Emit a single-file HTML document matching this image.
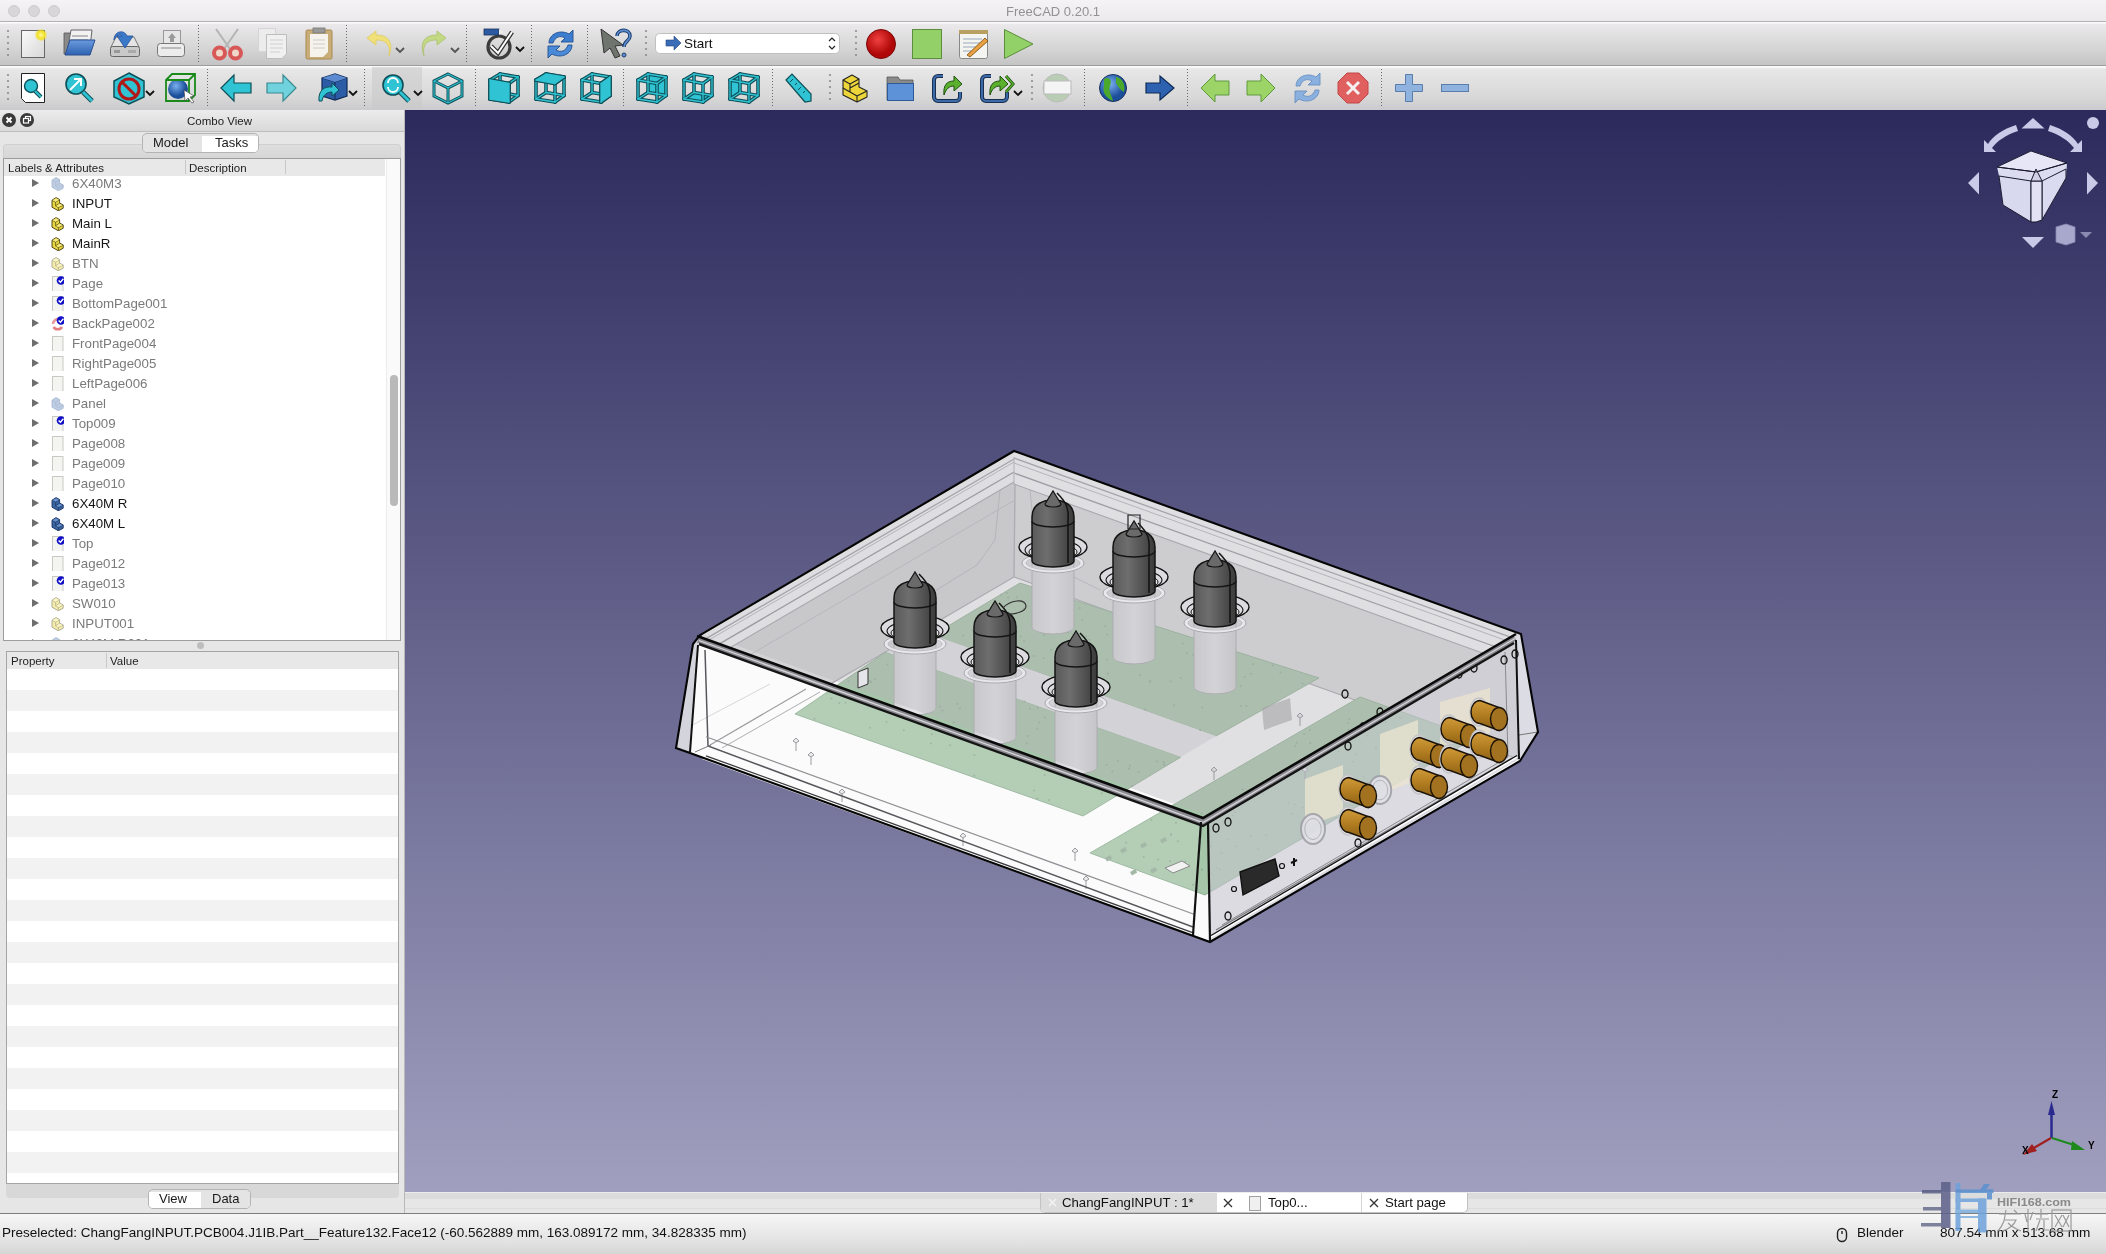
<!DOCTYPE html>
<html><head><meta charset="utf-8">
<style>
*{box-sizing:border-box;margin:0;padding:0}
html,body{width:2106px;height:1254px;overflow:hidden;background:#e9e9e9;font-family:"Liberation Sans",sans-serif;color:#1a1a1a}
body{will-change:transform}
.a{position:absolute}
#title{left:0;top:0;width:2106px;height:22px;background:linear-gradient(#f5f3f5,#ebe9eb);border-bottom:1px solid #b2b0b2}
#title .dot{position:absolute;top:5px;width:12px;height:12px;border-radius:50%;background:#d8d6d8;border:1px solid #cdcbcd}
#title .t{position:absolute;left:0;width:2106px;top:4px;text-align:center;font-size:13px;color:#939193}
.tb{left:0;width:2106px;border-bottom:1px solid #9c9c9c}
#tb1{top:22px;height:44px;background:linear-gradient(#fcfcfc 0,#fcfcfc 1px,#ebe9eb 2px,#d6d6d6 60%,#c4c4c4 100%)}
#tb2{top:66px;height:44px;border-bottom:none;background:linear-gradient(#fafafa 0,#fafafa 1px,#e7e7e7 3px,#d8d8d8 70%,#cbcace 100%)}
.grip{position:absolute;left:7px;width:3px;height:30px;background:radial-gradient(circle,#8a8a8a 1px,transparent 1.3px) 0 0/3px 6px}
.sep{position:absolute;width:1px;height:36px;background:repeating-linear-gradient(#707070 0 1px,transparent 1px 3px)}
#left{left:0;top:110px;width:405px;height:1103px;background:#e6e6e6;border-right:1px solid #b9b9b9}
#view{left:405px;top:110px;width:1701px;height:1082px;background:linear-gradient(#2c2a5c,#a09fbf)}
#tabs{left:405px;top:1192px;width:1701px;height:21px;background:linear-gradient(#ececf0 0,#ececf0 1px,#dcdcdc 1px,#dcdcdc 7px,#e6e6e6 7px,#e6e6e6 16px,#dcdcdc 16px,#dcdcdc 17px,#e6e6e6 17px)}
#status{left:0;top:1213px;width:2106px;height:41px;background:linear-gradient(#f6f6f6,#e2e2e2 70%,#d6d6d6);border-top:1px solid #7e7e7e}
.st{position:absolute;font-size:13px;top:11px;color:#111}
/* left panel */
#combo{left:0;top:0;width:404px;height:22px;background:linear-gradient(#ececec,#d9d9d9);border-bottom:1px solid #bdbdbd}
#combo .ct{position:absolute;left:36px;width:367px;text-align:center;top:5px;font-size:11.5px;color:#222}
.cbtn{position:absolute;top:3px;width:14px;height:14px;border-radius:50%;background:#3a3a3a}
.seg{position:absolute;height:20px;border:1px solid #b4b4b4;border-radius:5px;background:#e3e3e3;overflow:hidden;font-size:13px}
.seg span{position:absolute;top:2px;height:18px}
#tframe{left:3px;top:34px;width:398px;height:14px;background:linear-gradient(#dedede,#d6d6d6);border:1px solid #cfcfcf;border-bottom:none;border-radius:4px 4px 0 0}
#tree{left:3px;top:48px;width:398px;height:483px;background:#fff;border:1px solid #9d9d9d;overflow:hidden}
#thead{left:0;top:0;width:381px;height:17px;background:#e8e8e8;font-size:11.5px;color:#222}
#thead span{position:absolute;top:3px}
.row{position:absolute;left:0;height:20px;width:380px;font-size:13.3px}
.row .tri{position:absolute;left:28px;top:6px;width:0;height:0;border-left:7px solid #6e6e6e;border-top:4.5px solid transparent;border-bottom:4.5px solid transparent}
.row .ic{position:absolute;left:47px;top:3px;width:13px;height:15px}
.row span{position:absolute;left:68px;top:3px}
.g{color:#7a7a7a}.d{color:#151515}
#sbtrack{left:382px;top:0;width:15px;height:481px;background:#fafafa;border-left:1px solid #ececec}
#sbthumb{left:386px;top:216px;width:8px;height:131px;border-radius:4px;background:#b9b9b9}
#prop{left:6px;top:541px;width:393px;height:533px;background:#fff;border:1px solid #a5a5a5;overflow:hidden}
#phead{left:0;top:0;width:391px;height:17px;background:#e8e8e8;font-size:11.5px;color:#222}
#phead span{position:absolute;top:3px}
.prow{position:absolute;left:0;width:391px;height:21px;background:#f3f2f3}
#pframe{left:6px;top:1074px;width:393px;height:14px;background:#d8d8d8;border-radius:0 0 4px 4px}
</style></head><body>
<svg width="0" height="0" style="position:absolute">
<defs>
 <g id="yel"><path d="M1,4.2 L5,1.6 L8.6,3.6 L8.6,7 L12.2,9 L12.2,12.2 L7.4,14.8 L1,11.2 Z" fill="#e9d741" stroke="#3f3810" stroke-width="0.9" stroke-linejoin="round"/><path d="M1,4.2 L4.6,6.2 L8.6,3.6 M4.6,6.2 V9.8 L8.6,7.2 M4.6,9.8 L7.4,11.6 L12.2,9 M7.4,11.6 V14.8" fill="none" stroke="#5a4f16" stroke-width="0.8"/><path d="M1.6,4.3 L5,2.2 L8,3.8 L4.6,5.8 Z M5.2,10 L8.6,7.8 L11.6,9.2 L7.4,11 Z" fill="#f6ea80"/></g>
 <g id="yelf" opacity="0.45"><use href="#yel"/></g>
 <g id="blue"><path d="M1,4.2 L5,1.6 L8.6,3.6 L8.6,7 L12.2,9 L12.2,12.2 L7.4,14.8 L1,11.2 Z" fill="#3a64a0" stroke="#1a3060" stroke-width="0.9" stroke-linejoin="round"/><path d="M1,4.2 L4.6,6.2 L8.6,3.6 M4.6,6.2 V9.8 L8.6,7.2 M4.6,9.8 L7.4,11.6 L12.2,9 M7.4,11.6 V14.8" fill="none" stroke="#1e3a6a" stroke-width="0.8"/><path d="M1.6,4.3 L5,2.2 L8,3.8 L4.6,5.8 Z M5.2,10 L8.6,7.8 L11.6,9.2 L7.4,11 Z" fill="#6a92cc"/></g>
 <g id="bluef" opacity="0.5"><path d="M1,4.2 L5,1.6 L8.6,3.6 L8.6,7 L12.2,9 L12.2,12.2 L7.4,14.8 L1,11.2 Z" fill="#7e9cc8" stroke="#5a78a8" stroke-width="0.9" stroke-linejoin="round"/><path d="M1,4.2 L4.6,6.2 L8.6,3.6 M4.6,6.2 V9.8 L8.6,7.2 M4.6,9.8 L7.4,11.6 L12.2,9" fill="none" stroke="#5a78a8" stroke-width="0.7"/></g>
 <g id="page"><rect x="1.5" y="0.5" width="10.5" height="15" fill="#f4f4f0" stroke="#c9c9c4" stroke-width="1"/></g>
 <g id="chk"><circle cx="10" cy="4.5" r="4.3" fill="#1010c8"/><path d="M7.6,4.6 L9.4,6.3 L12.4,2.8" fill="none" stroke="#fff" stroke-width="1.4"/></g>
 <g id="pagec"><use href="#page"/><use href="#chk"/></g>
 <g id="backc"><path d="M2,8 A5,5 0 0 1 9,3.5" fill="none" stroke="#e89a9a" stroke-width="2.5"/><path d="M2.5,11 A5,5 0 0 0 11,11" fill="none" stroke="#e48080" stroke-width="2.5"/><use href="#chk"/></g>
</defs></svg>
<div id="title" class="a">
 <div class="dot" style="left:8px"></div><div class="dot" style="left:28px"></div><div class="dot" style="left:48px"></div>
 <div class="t">FreeCAD 0.20.1</div>
</div>
<div id="tb1" class="a tb"></div>
<div id="tb2" class="a tb"></div>
<svg class="a" style="left:0;top:0" width="2106" height="110" viewBox="0 0 2106 110">
<defs>
<linearGradient id="gPage" x1="0" y1="0" x2="1" y2="1"><stop offset="0" stop-color="#fafafa"/><stop offset="1" stop-color="#d8d8d8"/></linearGradient>
<radialGradient id="gSun"><stop offset="0" stop-color="#fff7a0"/><stop offset="0.6" stop-color="#f2e020"/><stop offset="1" stop-color="#f2e020" stop-opacity="0"/></radialGradient>
<linearGradient id="gBlue" x1="0" y1="0" x2="0" y2="1"><stop offset="0" stop-color="#6a9be0"/><stop offset="1" stop-color="#2e62b0"/></linearGradient>
<radialGradient id="gRed" cx="0.4" cy="0.35"><stop offset="0" stop-color="#f04040"/><stop offset="1" stop-color="#b00808"/></radialGradient>
<radialGradient id="gGlobe" cx="0.4" cy="0.35"><stop offset="0" stop-color="#7ab0f0"/><stop offset="1" stop-color="#1c4f9a"/></radialGradient>
</defs>
<circle cx="8" cy="31" r="1.1" fill="#8c8c8c"/>
<circle cx="8" cy="37" r="1.1" fill="#8c8c8c"/>
<circle cx="8" cy="43" r="1.1" fill="#8c8c8c"/>
<circle cx="8" cy="49" r="1.1" fill="#8c8c8c"/>
<circle cx="8" cy="55" r="1.1" fill="#8c8c8c"/>
<rect x="21.5" y="30.5" width="23" height="27" fill="url(#gPage)" stroke="#666" stroke-width="1"/>
<circle cx="41" cy="35" r="6.5" fill="url(#gSun)"/>
<polygon points="64,33 70,33 72,35 72,54 64,54" fill="#8a8a8a" stroke="#555" stroke-width="0.8"/>
<polygon points="71,30 92,30 90,47 68,47" fill="#f2f2f2" stroke="#666" stroke-width="1"/>
<path d="M72,36 H88 M71,40 H88" stroke="#aaa" stroke-width="1.5"/>
<polygon points="65,55 70,40 95,40 90,55" fill="url(#gBlue)" stroke="#2a4f90" stroke-width="1"/>
<polygon points="111,47 116,37 134,37 139,47" fill="#e4e4e4" stroke="#777" stroke-width="1"/>
<rect x="110.5" y="46.5" width="29" height="10" rx="2" fill="#c9c9c9" stroke="#666" stroke-width="1"/>
<rect x="114" y="50" width="6" height="3" fill="#999"/><rect x="128" y="50" width="8" height="3" fill="#aaa"/>
<path d="M114,40 C114,31 124,29 127,36 L133,36 L125,48 L117,36 L122,36 C120,34 116,35 114,40 Z" fill="#3b78c8" stroke="#24509a" stroke-width="0.8"/>
<rect x="163.5" y="30.5" width="17" height="14" fill="#e6e6e6" stroke="#999" stroke-width="1"/>
<path d="M172,33 L176,38 H174 V42 H170 V38 H168 Z" fill="#9a9a9a"/>
<rect x="157.5" y="43.5" width="27" height="13" rx="3" fill="#ececec" stroke="#777" stroke-width="1"/>
<path d="M161,48 H181" stroke="#bbb" stroke-width="2"/>
<line x1="198.5" y1="25" x2="198.5" y2="62" stroke="#6a6a6a" stroke-width="1" stroke-dasharray="1,2"/>
<path d="M216,29 L230,49 M238,29 L224,49" stroke="#b4b4b4" stroke-width="2"/>
<ellipse cx="219.5" cy="53" rx="5.5" ry="5.5" fill="#f0d8c8" stroke="#d85858" stroke-width="4"/><ellipse cx="235.5" cy="53" rx="5.5" ry="5.5" fill="#f0d8c8" stroke="#d85858" stroke-width="4"/>
<rect x="258.5" y="28.5" width="17" height="23" fill="#ececec" stroke="#d4d4d4" stroke-width="1"/>
<polygon points="266.5,34.5 286.5,34.5 286.5,54 282,58.5 266.5,58.5" fill="#f0f0f0" stroke="#bdbdbd" stroke-width="1"/>
<path d="M270,40 H283 M270,44 H283 M270,48 H283 M270,52 H280" stroke="#d0d0d0" stroke-width="1"/>
<rect x="306" y="30" width="26" height="29" rx="1.5" fill="#c8ad78" stroke="#a88a50" stroke-width="1"/>
<polygon points="310,34 328,34 328,52 323,57 310,57" fill="#f6f3ec"/>
<rect x="313" y="28" width="12" height="5" fill="#999" stroke="#777" stroke-width="0.8"/>
<path d="M313,40 H325 M313,44 H325 M313,48 H325" stroke="#ccc" stroke-width="1"/>
<line x1="346.5" y1="25" x2="346.5" y2="62" stroke="#6a6a6a" stroke-width="1" stroke-dasharray="1,2"/>
<path d="M389,56 C391,44 386,40 376,40 L376,45 L367,38 L376,31 L376,35 C388,35 394,42 389,56 Z" fill="#efe07a" stroke="#e0cc60" stroke-width="0.8"/>
<path d="M396,48 L400,52 L404,48" fill="none" stroke="#555" stroke-width="1.8"/>
<path d="M424,56 C422,44 427,40 437,40 L437,45 L446,38 L437,31 L437,35 C425,35 419,42 424,56 Z" fill="#c2d882" stroke="#aac070" stroke-width="0.8"/>
<path d="M451,48 L455,52 L459,48" fill="none" stroke="#555" stroke-width="1.8"/>
<line x1="466.5" y1="25" x2="466.5" y2="62" stroke="#6a6a6a" stroke-width="1" stroke-dasharray="1,2"/>
<circle cx="499" cy="47" r="11" fill="none" stroke="#3c3c3c" stroke-width="3.2"/>
<path d="M491,46 L498,53 L512,32" fill="none" stroke="#333" stroke-width="4.5"/><path d="M491,46 L498,53 L512,32" fill="none" stroke="#fff" stroke-width="2"/>
<rect x="484" y="29" width="15" height="6" fill="#2c5aa0" stroke="#1a3460" stroke-width="0.8"/><polygon points="499,29 503,32 499,35" fill="#eee"/>
<path d="M516,47 L520,51 L524,47" fill="none" stroke="#111" stroke-width="1.8"/>
<line x1="531.5" y1="25" x2="531.5" y2="62" stroke="#6a6a6a" stroke-width="1" stroke-dasharray="1,2"/>
<path d="M549,43 C549,34 560,29 569,34 L573,30 L573,42 L561,42 L565,38 C560,35 555,37 553,43 Z" fill="#3c7dd0" stroke="#1f4f8f" stroke-width="0.9"/>
<path d="M572,45 C572,54 561,59 552,54 L548,58 L548,46 L560,46 L556,50 C561,53 566,51 568,45 Z" fill="#4a8ad8" stroke="#1f4f8f" stroke-width="0.9"/>
<line x1="587.5" y1="25" x2="587.5" y2="62" stroke="#6a6a6a" stroke-width="1" stroke-dasharray="1,2"/>
<polygon points="601,29 623,45 615,46 620,56 615,58 610,48 604,53" fill="#6f746e" stroke="#333" stroke-width="1"/>
<path d="M617,36 C617,29 630,28 630,36 C630,41 624,41 624,47" fill="none" stroke="#1c3e70" stroke-width="3.6"/><path d="M617,36 C617,29 630,28 630,36 C630,41 624,41 624,47" fill="none" stroke="#5e8ed0" stroke-width="1.6"/>
<circle cx="624" cy="55" r="2" fill="#5e8ed0" stroke="#1c3e70" stroke-width="1"/>
<circle cx="646" cy="31" r="1.1" fill="#8c8c8c"/>
<circle cx="646" cy="37" r="1.1" fill="#8c8c8c"/>
<circle cx="646" cy="43" r="1.1" fill="#8c8c8c"/>
<circle cx="646" cy="49" r="1.1" fill="#8c8c8c"/>
<circle cx="646" cy="55" r="1.1" fill="#8c8c8c"/>
<rect x="655.5" y="33.5" width="184" height="20" rx="4" fill="#fff" stroke="#c0c0c0" stroke-width="1"/>
<polygon points="666,40 674,40 674,36 681,43 674,50 674,46 666,46" fill="#3a6cb8" stroke="#22457e" stroke-width="0.6"/>
<text x="684" y="48" font-family="Liberation Sans" font-size="13.5" fill="#111">Start</text>
<path d="M829,41 L832,38 L835,41 M829,46 L832,49 L835,46" fill="none" stroke="#222" stroke-width="1.2"/>
<circle cx="856" cy="31" r="1.1" fill="#8c8c8c"/>
<circle cx="856" cy="37" r="1.1" fill="#8c8c8c"/>
<circle cx="856" cy="43" r="1.1" fill="#8c8c8c"/>
<circle cx="856" cy="49" r="1.1" fill="#8c8c8c"/>
<circle cx="856" cy="55" r="1.1" fill="#8c8c8c"/>
<circle cx="881" cy="44" r="14.5" fill="url(#gRed)" stroke="#7a0a0a" stroke-width="1"/>
<rect x="912.5" y="29.5" width="29" height="29" fill="#93d068" stroke="#5c8e3e" stroke-width="1"/>
<rect x="959.5" y="31.5" width="28" height="27" rx="2" fill="#f4f4f0" stroke="#888" stroke-width="1"/>
<rect x="959" y="30" width="29" height="4" fill="#b8a060"/>
<path d="M963,39 H982 M963,43 H980 M963,47 H976 M963,51 H972" stroke="#9ab" stroke-width="1"/>
<path d="M967,55 L985,38 L988,41 L970,57 Z" fill="#e8a040" stroke="#7a4a10" stroke-width="0.8"/>
<polygon points="1004.5,29.5 1033,44 1004.5,58.5" fill="#92d068" stroke="#5c8e3e" stroke-width="1"/>
<circle cx="8" cy="75" r="1.1" fill="#8c8c8c"/>
<circle cx="8" cy="81" r="1.1" fill="#8c8c8c"/>
<circle cx="8" cy="87" r="1.1" fill="#8c8c8c"/>
<circle cx="8" cy="93" r="1.1" fill="#8c8c8c"/>
<circle cx="8" cy="99" r="1.1" fill="#8c8c8c"/>
<polygon points="21.5,73.5 44.5,73.5 44.5,102.5 25.5,102.5 21.5,98.5" fill="#fff" stroke="#222" stroke-width="1"/>
<circle cx="31" cy="86" r="6.5" fill="#2fc3d3" stroke="#0e4f57" stroke-width="1.4"/><path d="M35,91 L41,97" stroke="#0e4f57" stroke-width="4"/><path d="M35,91 L41,97" stroke="#2fc3d3" stroke-width="2"/>
<circle cx="76" cy="84" r="10" fill="#2fc3d3" stroke="#0e4f57" stroke-width="1.6"/><path d="M83,92 L92,101" stroke="#0e4f57" stroke-width="5"/><path d="M83,92 L92,101" stroke="#2fc3d3" stroke-width="3"/>
<path d="M70,90 L80,80 M74,79 H81 V86" fill="none" stroke="#fff" stroke-width="2"/>
<polygon points="129,73 144,81 144,97 129,104 114,97 114,81" fill="#2fc3d3" stroke="#0e4f57" stroke-width="1.5"/>
<circle cx="129" cy="89" r="10" fill="none" stroke="#b01818" stroke-width="3"/><path d="M122,82 L136,96" stroke="#b01818" stroke-width="3"/>
<path d="M146,91 L150,95 L154,91" fill="none" stroke="#111" stroke-width="1.8"/>
<circle cx="178" cy="89" r="10" fill="url(#gGlobe)"/>
<polygon points="166,80 172,74 195,74 195,95 189,101 166,101" fill="none" stroke="#1a8a1a" stroke-width="1.8"/><path d="M166,80 H189 V101 M189,80 L195,74" fill="none" stroke="#1a8a1a" stroke-width="1.8"/>
<polygon points="184,90 194,96 190,97 194,102 192,103 188,98 185,101" fill="#fff" stroke="#333" stroke-width="0.6"/>
<line x1="207.5" y1="69" x2="207.5" y2="106" stroke="#6a6a6a" stroke-width="1" stroke-dasharray="1,2"/>
<polygon points="221,88 234,75 234,83 251,83 251,93 234,93 234,101" fill="#2fc3d3" stroke="#0e4f57" stroke-width="1.2"/>
<polygon points="296,88 283,75 283,83 267,83 267,93 283,93 283,101" fill="#6fd2dc" stroke="#3a8a92" stroke-width="1.2"/>
<polygon points="322,78 335,74 347,78 347,96 335,100 322,96" fill="#2d5ca6" stroke="#0f2a55" stroke-width="1.2"/><path d="M322,78 L335,82 L347,78 M335,82 V100" fill="none" stroke="#0f2a55" stroke-width="1"/><polygon points="322,78 335,74 347,78 335,82" fill="#5b8ad0"/>
<path d="M319,101 C318,90 325,86 332,87 L332,83 L339,90 L332,96 L332,92 C327,92 323,95 322,101 Z" fill="#2fc3d3" stroke="#0e4f57" stroke-width="1"/>
<path d="M349,91 L353,95 L357,91" fill="none" stroke="#111" stroke-width="1.8"/>
<line x1="364.5" y1="69" x2="364.5" y2="106" stroke="#6a6a6a" stroke-width="1" stroke-dasharray="1,2"/>
<rect x="372" y="67" width="50" height="42" fill="#c9c9c9" opacity="0.55"/>
<circle cx="393" cy="85" r="10" fill="#2fc3d3" stroke="#0e4f57" stroke-width="1.6"/><path d="M400,92 L409,101" stroke="#0e4f57" stroke-width="5"/><path d="M400,92 L409,101" stroke="#2fc3d3" stroke-width="3"/>
<path d="M388,83 A5,5 0 0 1 398,83 M398,87 A5,5 0 0 1 388,87" fill="none" stroke="#fff" stroke-width="1.8"/>
<path d="M414,91 L418,95 L422,91" fill="none" stroke="#111" stroke-width="1.8"/>
<g stroke="#0e4f57" fill="none" stroke-width="3"><polygon points="448,74 462,81 462,96 448,103 434,96 434,81"/><path d="M434,81 L448,88 L462,81 M448,88 V103"/></g>
<g stroke="#2fc3d3" fill="none" stroke-width="1.1"><polygon points="448,74 462,81 462,96 448,103 434,96 434,81"/><path d="M434,81 L448,88 L462,81 M448,88 V103"/></g>
<line x1="475.5" y1="69" x2="475.5" y2="106" stroke="#6a6a6a" stroke-width="1" stroke-dasharray="1,2"/>
<g transform="translate(489,73)" stroke-linejoin="round" stroke-linecap="round"><line x1="1" y1="7" x2="20" y2="10.5" stroke="#0e4f57" stroke-width="3.6"/><line x1="20" y1="10.5" x2="20" y2="29" stroke="#0e4f57" stroke-width="3.6"/><line x1="20" y1="29" x2="1" y2="26" stroke="#0e4f57" stroke-width="3.6"/><line x1="1" y1="26" x2="1" y2="7" stroke="#0e4f57" stroke-width="3.6"/><line x1="11" y1="1" x2="29" y2="4" stroke="#0e4f57" stroke-width="3.6"/><line x1="29" y1="4" x2="29" y2="22.5" stroke="#0e4f57" stroke-width="3.6"/><line x1="29" y1="22.5" x2="11" y2="19.5" stroke="#0e4f57" stroke-width="3.6"/><line x1="11" y1="19.5" x2="11" y2="1" stroke="#0e4f57" stroke-width="3.6"/><line x1="1" y1="7" x2="11" y2="1" stroke="#0e4f57" stroke-width="3.6"/><line x1="20" y1="10.5" x2="29" y2="4" stroke="#0e4f57" stroke-width="3.6"/><line x1="20" y1="29" x2="29" y2="22.5" stroke="#0e4f57" stroke-width="3.6"/><line x1="1" y1="26" x2="11" y2="19.5" stroke="#0e4f57" stroke-width="3.6"/><line x1="1" y1="7" x2="20" y2="10.5" stroke="#2fc3d3" stroke-width="1.3"/><line x1="20" y1="10.5" x2="20" y2="29" stroke="#2fc3d3" stroke-width="1.3"/><line x1="20" y1="29" x2="1" y2="26" stroke="#2fc3d3" stroke-width="1.3"/><line x1="1" y1="26" x2="1" y2="7" stroke="#2fc3d3" stroke-width="1.3"/><line x1="11" y1="1" x2="29" y2="4" stroke="#2fc3d3" stroke-width="1.3"/><line x1="29" y1="4" x2="29" y2="22.5" stroke="#2fc3d3" stroke-width="1.3"/><line x1="29" y1="22.5" x2="11" y2="19.5" stroke="#2fc3d3" stroke-width="1.3"/><line x1="11" y1="19.5" x2="11" y2="1" stroke="#2fc3d3" stroke-width="1.3"/><line x1="1" y1="7" x2="11" y2="1" stroke="#2fc3d3" stroke-width="1.3"/><line x1="20" y1="10.5" x2="29" y2="4" stroke="#2fc3d3" stroke-width="1.3"/><line x1="20" y1="29" x2="29" y2="22.5" stroke="#2fc3d3" stroke-width="1.3"/><line x1="1" y1="26" x2="11" y2="19.5" stroke="#2fc3d3" stroke-width="1.3"/><polygon points="1,7 20,10.5 20,29 1,26" fill="#2fc3d3" stroke="#0e4f57" stroke-width="1.6"/><line x1="1" y1="7" x2="20" y2="10.5" stroke="#0e4f57" stroke-width="3.6"/><line x1="20" y1="10.5" x2="20" y2="29" stroke="#0e4f57" stroke-width="3.6"/><line x1="20" y1="29" x2="1" y2="26" stroke="#0e4f57" stroke-width="3.6"/><line x1="1" y1="26" x2="1" y2="7" stroke="#0e4f57" stroke-width="3.6"/><line x1="1" y1="7" x2="20" y2="10.5" stroke="#2fc3d3" stroke-width="1.3"/><line x1="20" y1="10.5" x2="20" y2="29" stroke="#2fc3d3" stroke-width="1.3"/><line x1="20" y1="29" x2="1" y2="26" stroke="#2fc3d3" stroke-width="1.3"/><line x1="1" y1="26" x2="1" y2="7" stroke="#2fc3d3" stroke-width="1.3"/><polygon points="1,7 20,10.5 20,29 1,26" fill="#2fc3d3" stroke="none" transform="translate(0,0)"/></g>
<g transform="translate(535,73)" stroke-linejoin="round" stroke-linecap="round"><line x1="1" y1="7" x2="20" y2="10.5" stroke="#0e4f57" stroke-width="3.6"/><line x1="20" y1="10.5" x2="20" y2="29" stroke="#0e4f57" stroke-width="3.6"/><line x1="20" y1="29" x2="1" y2="26" stroke="#0e4f57" stroke-width="3.6"/><line x1="1" y1="26" x2="1" y2="7" stroke="#0e4f57" stroke-width="3.6"/><line x1="11" y1="1" x2="29" y2="4" stroke="#0e4f57" stroke-width="3.6"/><line x1="29" y1="4" x2="29" y2="22.5" stroke="#0e4f57" stroke-width="3.6"/><line x1="29" y1="22.5" x2="11" y2="19.5" stroke="#0e4f57" stroke-width="3.6"/><line x1="11" y1="19.5" x2="11" y2="1" stroke="#0e4f57" stroke-width="3.6"/><line x1="1" y1="7" x2="11" y2="1" stroke="#0e4f57" stroke-width="3.6"/><line x1="20" y1="10.5" x2="29" y2="4" stroke="#0e4f57" stroke-width="3.6"/><line x1="20" y1="29" x2="29" y2="22.5" stroke="#0e4f57" stroke-width="3.6"/><line x1="1" y1="26" x2="11" y2="19.5" stroke="#0e4f57" stroke-width="3.6"/><line x1="1" y1="7" x2="20" y2="10.5" stroke="#2fc3d3" stroke-width="1.3"/><line x1="20" y1="10.5" x2="20" y2="29" stroke="#2fc3d3" stroke-width="1.3"/><line x1="20" y1="29" x2="1" y2="26" stroke="#2fc3d3" stroke-width="1.3"/><line x1="1" y1="26" x2="1" y2="7" stroke="#2fc3d3" stroke-width="1.3"/><line x1="11" y1="1" x2="29" y2="4" stroke="#2fc3d3" stroke-width="1.3"/><line x1="29" y1="4" x2="29" y2="22.5" stroke="#2fc3d3" stroke-width="1.3"/><line x1="29" y1="22.5" x2="11" y2="19.5" stroke="#2fc3d3" stroke-width="1.3"/><line x1="11" y1="19.5" x2="11" y2="1" stroke="#2fc3d3" stroke-width="1.3"/><line x1="1" y1="7" x2="11" y2="1" stroke="#2fc3d3" stroke-width="1.3"/><line x1="20" y1="10.5" x2="29" y2="4" stroke="#2fc3d3" stroke-width="1.3"/><line x1="20" y1="29" x2="29" y2="22.5" stroke="#2fc3d3" stroke-width="1.3"/><line x1="1" y1="26" x2="11" y2="19.5" stroke="#2fc3d3" stroke-width="1.3"/><polygon points="1,7 11,1 29,4 20,10.5" fill="#2fc3d3" stroke="#0e4f57" stroke-width="1.6"/><line x1="1" y1="7" x2="11" y2="1" stroke="#0e4f57" stroke-width="3.6"/><line x1="11" y1="1" x2="29" y2="4" stroke="#0e4f57" stroke-width="3.6"/><line x1="29" y1="4" x2="20" y2="10.5" stroke="#0e4f57" stroke-width="3.6"/><line x1="20" y1="10.5" x2="1" y2="7" stroke="#0e4f57" stroke-width="3.6"/><line x1="1" y1="7" x2="11" y2="1" stroke="#2fc3d3" stroke-width="1.3"/><line x1="11" y1="1" x2="29" y2="4" stroke="#2fc3d3" stroke-width="1.3"/><line x1="29" y1="4" x2="20" y2="10.5" stroke="#2fc3d3" stroke-width="1.3"/><line x1="20" y1="10.5" x2="1" y2="7" stroke="#2fc3d3" stroke-width="1.3"/><polygon points="1,7 11,1 29,4 20,10.5" fill="#2fc3d3" stroke="none" transform="translate(0,0)"/></g>
<g transform="translate(581,73)" stroke-linejoin="round" stroke-linecap="round"><line x1="1" y1="7" x2="20" y2="10.5" stroke="#0e4f57" stroke-width="3.6"/><line x1="20" y1="10.5" x2="20" y2="29" stroke="#0e4f57" stroke-width="3.6"/><line x1="20" y1="29" x2="1" y2="26" stroke="#0e4f57" stroke-width="3.6"/><line x1="1" y1="26" x2="1" y2="7" stroke="#0e4f57" stroke-width="3.6"/><line x1="11" y1="1" x2="29" y2="4" stroke="#0e4f57" stroke-width="3.6"/><line x1="29" y1="4" x2="29" y2="22.5" stroke="#0e4f57" stroke-width="3.6"/><line x1="29" y1="22.5" x2="11" y2="19.5" stroke="#0e4f57" stroke-width="3.6"/><line x1="11" y1="19.5" x2="11" y2="1" stroke="#0e4f57" stroke-width="3.6"/><line x1="1" y1="7" x2="11" y2="1" stroke="#0e4f57" stroke-width="3.6"/><line x1="20" y1="10.5" x2="29" y2="4" stroke="#0e4f57" stroke-width="3.6"/><line x1="20" y1="29" x2="29" y2="22.5" stroke="#0e4f57" stroke-width="3.6"/><line x1="1" y1="26" x2="11" y2="19.5" stroke="#0e4f57" stroke-width="3.6"/><line x1="1" y1="7" x2="20" y2="10.5" stroke="#2fc3d3" stroke-width="1.3"/><line x1="20" y1="10.5" x2="20" y2="29" stroke="#2fc3d3" stroke-width="1.3"/><line x1="20" y1="29" x2="1" y2="26" stroke="#2fc3d3" stroke-width="1.3"/><line x1="1" y1="26" x2="1" y2="7" stroke="#2fc3d3" stroke-width="1.3"/><line x1="11" y1="1" x2="29" y2="4" stroke="#2fc3d3" stroke-width="1.3"/><line x1="29" y1="4" x2="29" y2="22.5" stroke="#2fc3d3" stroke-width="1.3"/><line x1="29" y1="22.5" x2="11" y2="19.5" stroke="#2fc3d3" stroke-width="1.3"/><line x1="11" y1="19.5" x2="11" y2="1" stroke="#2fc3d3" stroke-width="1.3"/><line x1="1" y1="7" x2="11" y2="1" stroke="#2fc3d3" stroke-width="1.3"/><line x1="20" y1="10.5" x2="29" y2="4" stroke="#2fc3d3" stroke-width="1.3"/><line x1="20" y1="29" x2="29" y2="22.5" stroke="#2fc3d3" stroke-width="1.3"/><line x1="1" y1="26" x2="11" y2="19.5" stroke="#2fc3d3" stroke-width="1.3"/><polygon points="20,10.5 29,4 29,22.5 20,29" fill="#2fc3d3" stroke="#0e4f57" stroke-width="1.6"/><line x1="20" y1="10.5" x2="29" y2="4" stroke="#0e4f57" stroke-width="3.6"/><line x1="29" y1="4" x2="29" y2="22.5" stroke="#0e4f57" stroke-width="3.6"/><line x1="29" y1="22.5" x2="20" y2="29" stroke="#0e4f57" stroke-width="3.6"/><line x1="20" y1="29" x2="20" y2="10.5" stroke="#0e4f57" stroke-width="3.6"/><line x1="20" y1="10.5" x2="29" y2="4" stroke="#2fc3d3" stroke-width="1.3"/><line x1="29" y1="4" x2="29" y2="22.5" stroke="#2fc3d3" stroke-width="1.3"/><line x1="29" y1="22.5" x2="20" y2="29" stroke="#2fc3d3" stroke-width="1.3"/><line x1="20" y1="29" x2="20" y2="10.5" stroke="#2fc3d3" stroke-width="1.3"/><polygon points="20,10.5 29,4 29,22.5 20,29" fill="#2fc3d3" stroke="none" transform="translate(0,0)"/></g>
<line x1="623.5" y1="69" x2="623.5" y2="106" stroke="#6a6a6a" stroke-width="1" stroke-dasharray="1,2"/>
<g transform="translate(637,73)" stroke-linejoin="round" stroke-linecap="round"><polygon points="11,1 29,4 29,22.5 11,19.5" fill="#2fc3d3" stroke="none"/><line x1="1" y1="7" x2="20" y2="10.5" stroke="#0e4f57" stroke-width="3.6"/><line x1="20" y1="10.5" x2="20" y2="29" stroke="#0e4f57" stroke-width="3.6"/><line x1="20" y1="29" x2="1" y2="26" stroke="#0e4f57" stroke-width="3.6"/><line x1="1" y1="26" x2="1" y2="7" stroke="#0e4f57" stroke-width="3.6"/><line x1="11" y1="1" x2="29" y2="4" stroke="#0e4f57" stroke-width="3.6"/><line x1="29" y1="4" x2="29" y2="22.5" stroke="#0e4f57" stroke-width="3.6"/><line x1="29" y1="22.5" x2="11" y2="19.5" stroke="#0e4f57" stroke-width="3.6"/><line x1="11" y1="19.5" x2="11" y2="1" stroke="#0e4f57" stroke-width="3.6"/><line x1="1" y1="7" x2="11" y2="1" stroke="#0e4f57" stroke-width="3.6"/><line x1="20" y1="10.5" x2="29" y2="4" stroke="#0e4f57" stroke-width="3.6"/><line x1="20" y1="29" x2="29" y2="22.5" stroke="#0e4f57" stroke-width="3.6"/><line x1="1" y1="26" x2="11" y2="19.5" stroke="#0e4f57" stroke-width="3.6"/><line x1="1" y1="7" x2="20" y2="10.5" stroke="#2fc3d3" stroke-width="1.3"/><line x1="20" y1="10.5" x2="20" y2="29" stroke="#2fc3d3" stroke-width="1.3"/><line x1="20" y1="29" x2="1" y2="26" stroke="#2fc3d3" stroke-width="1.3"/><line x1="1" y1="26" x2="1" y2="7" stroke="#2fc3d3" stroke-width="1.3"/><line x1="11" y1="1" x2="29" y2="4" stroke="#2fc3d3" stroke-width="1.3"/><line x1="29" y1="4" x2="29" y2="22.5" stroke="#2fc3d3" stroke-width="1.3"/><line x1="29" y1="22.5" x2="11" y2="19.5" stroke="#2fc3d3" stroke-width="1.3"/><line x1="11" y1="19.5" x2="11" y2="1" stroke="#2fc3d3" stroke-width="1.3"/><line x1="1" y1="7" x2="11" y2="1" stroke="#2fc3d3" stroke-width="1.3"/><line x1="20" y1="10.5" x2="29" y2="4" stroke="#2fc3d3" stroke-width="1.3"/><line x1="20" y1="29" x2="29" y2="22.5" stroke="#2fc3d3" stroke-width="1.3"/><line x1="1" y1="26" x2="11" y2="19.5" stroke="#2fc3d3" stroke-width="1.3"/></g>
<g transform="translate(683,73)" stroke-linejoin="round" stroke-linecap="round"><polygon points="1,26 11,19.5 29,22.5 20,29" fill="#2fc3d3" stroke="none"/><line x1="1" y1="7" x2="20" y2="10.5" stroke="#0e4f57" stroke-width="3.6"/><line x1="20" y1="10.5" x2="20" y2="29" stroke="#0e4f57" stroke-width="3.6"/><line x1="20" y1="29" x2="1" y2="26" stroke="#0e4f57" stroke-width="3.6"/><line x1="1" y1="26" x2="1" y2="7" stroke="#0e4f57" stroke-width="3.6"/><line x1="11" y1="1" x2="29" y2="4" stroke="#0e4f57" stroke-width="3.6"/><line x1="29" y1="4" x2="29" y2="22.5" stroke="#0e4f57" stroke-width="3.6"/><line x1="29" y1="22.5" x2="11" y2="19.5" stroke="#0e4f57" stroke-width="3.6"/><line x1="11" y1="19.5" x2="11" y2="1" stroke="#0e4f57" stroke-width="3.6"/><line x1="1" y1="7" x2="11" y2="1" stroke="#0e4f57" stroke-width="3.6"/><line x1="20" y1="10.5" x2="29" y2="4" stroke="#0e4f57" stroke-width="3.6"/><line x1="20" y1="29" x2="29" y2="22.5" stroke="#0e4f57" stroke-width="3.6"/><line x1="1" y1="26" x2="11" y2="19.5" stroke="#0e4f57" stroke-width="3.6"/><line x1="1" y1="7" x2="20" y2="10.5" stroke="#2fc3d3" stroke-width="1.3"/><line x1="20" y1="10.5" x2="20" y2="29" stroke="#2fc3d3" stroke-width="1.3"/><line x1="20" y1="29" x2="1" y2="26" stroke="#2fc3d3" stroke-width="1.3"/><line x1="1" y1="26" x2="1" y2="7" stroke="#2fc3d3" stroke-width="1.3"/><line x1="11" y1="1" x2="29" y2="4" stroke="#2fc3d3" stroke-width="1.3"/><line x1="29" y1="4" x2="29" y2="22.5" stroke="#2fc3d3" stroke-width="1.3"/><line x1="29" y1="22.5" x2="11" y2="19.5" stroke="#2fc3d3" stroke-width="1.3"/><line x1="11" y1="19.5" x2="11" y2="1" stroke="#2fc3d3" stroke-width="1.3"/><line x1="1" y1="7" x2="11" y2="1" stroke="#2fc3d3" stroke-width="1.3"/><line x1="20" y1="10.5" x2="29" y2="4" stroke="#2fc3d3" stroke-width="1.3"/><line x1="20" y1="29" x2="29" y2="22.5" stroke="#2fc3d3" stroke-width="1.3"/><line x1="1" y1="26" x2="11" y2="19.5" stroke="#2fc3d3" stroke-width="1.3"/></g>
<g transform="translate(729,73)" stroke-linejoin="round" stroke-linecap="round"><polygon points="1,7 11,1 11,19.5 1,26" fill="#2fc3d3" stroke="none"/><line x1="1" y1="7" x2="20" y2="10.5" stroke="#0e4f57" stroke-width="3.6"/><line x1="20" y1="10.5" x2="20" y2="29" stroke="#0e4f57" stroke-width="3.6"/><line x1="20" y1="29" x2="1" y2="26" stroke="#0e4f57" stroke-width="3.6"/><line x1="1" y1="26" x2="1" y2="7" stroke="#0e4f57" stroke-width="3.6"/><line x1="11" y1="1" x2="29" y2="4" stroke="#0e4f57" stroke-width="3.6"/><line x1="29" y1="4" x2="29" y2="22.5" stroke="#0e4f57" stroke-width="3.6"/><line x1="29" y1="22.5" x2="11" y2="19.5" stroke="#0e4f57" stroke-width="3.6"/><line x1="11" y1="19.5" x2="11" y2="1" stroke="#0e4f57" stroke-width="3.6"/><line x1="1" y1="7" x2="11" y2="1" stroke="#0e4f57" stroke-width="3.6"/><line x1="20" y1="10.5" x2="29" y2="4" stroke="#0e4f57" stroke-width="3.6"/><line x1="20" y1="29" x2="29" y2="22.5" stroke="#0e4f57" stroke-width="3.6"/><line x1="1" y1="26" x2="11" y2="19.5" stroke="#0e4f57" stroke-width="3.6"/><line x1="1" y1="7" x2="20" y2="10.5" stroke="#2fc3d3" stroke-width="1.3"/><line x1="20" y1="10.5" x2="20" y2="29" stroke="#2fc3d3" stroke-width="1.3"/><line x1="20" y1="29" x2="1" y2="26" stroke="#2fc3d3" stroke-width="1.3"/><line x1="1" y1="26" x2="1" y2="7" stroke="#2fc3d3" stroke-width="1.3"/><line x1="11" y1="1" x2="29" y2="4" stroke="#2fc3d3" stroke-width="1.3"/><line x1="29" y1="4" x2="29" y2="22.5" stroke="#2fc3d3" stroke-width="1.3"/><line x1="29" y1="22.5" x2="11" y2="19.5" stroke="#2fc3d3" stroke-width="1.3"/><line x1="11" y1="19.5" x2="11" y2="1" stroke="#2fc3d3" stroke-width="1.3"/><line x1="1" y1="7" x2="11" y2="1" stroke="#2fc3d3" stroke-width="1.3"/><line x1="20" y1="10.5" x2="29" y2="4" stroke="#2fc3d3" stroke-width="1.3"/><line x1="20" y1="29" x2="29" y2="22.5" stroke="#2fc3d3" stroke-width="1.3"/><line x1="1" y1="26" x2="11" y2="19.5" stroke="#2fc3d3" stroke-width="1.3"/></g>
<line x1="772.5" y1="69" x2="772.5" y2="106" stroke="#6a6a6a" stroke-width="1" stroke-dasharray="1,2"/>
<polygon points="786,80 792,74 811,94 811,101 805,102" fill="#2fc3d3" stroke="#0e4f57" stroke-width="1.2"/>
<path d="M793,79 L790,82 M797,83 L795,85 M801,87 L798,90 M805,91 L803,93" stroke="#0e4f57" stroke-width="1"/>
<circle cx="830" cy="75" r="1.1" fill="#8c8c8c"/>
<circle cx="830" cy="81" r="1.1" fill="#8c8c8c"/>
<circle cx="830" cy="87" r="1.1" fill="#8c8c8c"/>
<circle cx="830" cy="93" r="1.1" fill="#8c8c8c"/>
<circle cx="830" cy="99" r="1.1" fill="#8c8c8c"/>
<g stroke="#222" stroke-width="1.1" stroke-linejoin="round"><polygon points="843,80 852,75 859,79 859,87 867,91 867,97 857,102 843,95" fill="#ecd63a"/><path d="M843,80 L850,84 L859,79 M850,84 V92 L843,88 M850,92 L857,96 L867,91 M857,96 V102 M850,88 L859,83" fill="none"/></g>
<polygon points="887,77 898,77 900,80 913,80 913,100 887,100" fill="#8a8a8a" stroke="#555" stroke-width="0.8"/><rect x="887.5" y="83.5" width="26" height="17" fill="#5e92d8" stroke="#2f5a99" stroke-width="1"/>
<path d="M943,76 H938 A4,4 0 0 0 934,80 V97 A4,4 0 0 0 938,101 H956 A4,4 0 0 0 960,97 V92" fill="none" stroke="#1a3050" stroke-width="4"/><path d="M943,76 H938 A4,4 0 0 0 934,80 V97 A4,4 0 0 0 938,101 H956 A4,4 0 0 0 960,97 V92" fill="none" stroke="#3c6aa8" stroke-width="2"/>
<path d="M944,95 C943,85 947,81 954,81 L954,76 L962,84 L954,91 L954,86 C949,86 946,89 944,95 Z" fill="#5ab02c" stroke="#1e5010" stroke-width="1"/>
<path d="M991,76 H986 A4,4 0 0 0 982,80 V97 A4,4 0 0 0 986,101 H1003 A4,4 0 0 0 1007,97 V92" fill="none" stroke="#1a3050" stroke-width="4"/><path d="M991,76 H986 A4,4 0 0 0 982,80 V97 A4,4 0 0 0 986,101 H1003 A4,4 0 0 0 1007,97 V92" fill="none" stroke="#3c6aa8" stroke-width="2"/>
<path d="M990,95 C989,85 993,81 1000,81 L1000,76 L1008,84 L1000,91 L1000,86 C995,86 992,89 990,95 Z" fill="#5ab02c" stroke="#1e5010" stroke-width="1"/><path d="M1006,76 L1013,84 L1006,92" fill="none" stroke="#1e5010" stroke-width="3"/><path d="M1006,76 L1013,84 L1006,92" fill="none" stroke="#5ab02c" stroke-width="1.5"/>
<path d="M1014,91 L1018,95 L1022,91" fill="none" stroke="#111" stroke-width="1.8"/>
<circle cx="1032" cy="75" r="1.1" fill="#8c8c8c"/>
<circle cx="1032" cy="81" r="1.1" fill="#8c8c8c"/>
<circle cx="1032" cy="87" r="1.1" fill="#8c8c8c"/>
<circle cx="1032" cy="93" r="1.1" fill="#8c8c8c"/>
<circle cx="1032" cy="99" r="1.1" fill="#8c8c8c"/>
<circle cx="1057" cy="88" r="14" fill="#b9cdb4" stroke="#bbb" stroke-width="1"/><rect x="1044" y="81" width="27" height="13" fill="#f4f4f4" stroke="#bbb" stroke-width="1"/>
<line x1="1084.5" y1="69" x2="1084.5" y2="106" stroke="#6a6a6a" stroke-width="1" stroke-dasharray="1,2"/>
<circle cx="1113" cy="88" r="13.5" fill="url(#gGlobe)" stroke="#1a3060" stroke-width="1"/><path d="M1104,79 C1108,76 1113,80 1110,86 C1108,92 1112,95 1113,101 C1106,98 1102,92 1104,86 Z M1116,77 C1122,78 1126,84 1124,92 C1120,90 1118,86 1116,83 Z" fill="#4aa82a"/>
<polygon points="1146,83 1160,83 1160,76 1174,88 1160,100 1160,93 1146,93" fill="#2c62b0" stroke="#0f2a55" stroke-width="1.2"/>
<line x1="1187.5" y1="69" x2="1187.5" y2="106" stroke="#6a6a6a" stroke-width="1" stroke-dasharray="1,2"/>
<polygon points="1201,88 1215,74 1215,81 1229,81 1229,95 1215,95 1215,102" fill="#9cd468" stroke="#5e9a3c" stroke-width="1"/>
<polygon points="1275,88 1261,74 1261,81 1247,81 1247,95 1261,95 1261,102" fill="#9cd468" stroke="#5e9a3c" stroke-width="1"/>
<path d="M1296,86 C1296,77 1307,72 1316,77 L1320,73 L1320,85 L1308,85 L1312,81 C1307,78 1302,80 1300,86 Z" fill="#8ab0e0" stroke="#6a90c0" stroke-width="0.9"/>
<path d="M1319,90 C1319,99 1308,104 1299,99 L1295,103 L1295,91 L1307,91 L1303,95 C1308,98 1313,96 1315,90 Z" fill="#8ab0e0" stroke="#6a90c0" stroke-width="0.9"/>
<polygon points="1347,73 1359,73 1368,82 1368,94 1359,103 1347,103 1338,94 1338,82" fill="#e06060" stroke="#c04848" stroke-width="1"/><path d="M1347,82 L1359,94 M1359,82 L1347,94" stroke="#f4f0f0" stroke-width="3"/>
<line x1="1381.5" y1="69" x2="1381.5" y2="106" stroke="#6a6a6a" stroke-width="1" stroke-dasharray="1,2"/>
<path d="M1395.5,84.5 H1405.5 V74.5 H1412.5 V84.5 H1422.5 V91.5 H1412.5 V101.5 H1405.5 V91.5 H1395.5 Z" fill="#8fb2de" stroke="#5a7eaa" stroke-width="1"/>
<rect x="1441.5" y="84.5" width="27" height="7" fill="#8fb2de" stroke="#5a7eaa" stroke-width="1"/>
</svg>
<div id="left" class="a">
 <div id="combo" class="a"><div class="cbtn" style="left:2px"><svg width="14" height="14"><path d="M4.5,4.5 L9.5,9.5 M9.5,4.5 L4.5,9.5" stroke="#fff" stroke-width="2"/></svg></div><div class="cbtn" style="left:20px"><svg width="14" height="14"><rect x="5.5" y="3.5" width="5" height="4" fill="none" stroke="#fff" stroke-width="1.2"/><rect x="3.5" y="5.5" width="5" height="4.5" fill="#3a3a3a" stroke="#fff" stroke-width="1.2"/></svg></div><div class="ct">Combo View</div></div>
 <div id="tframe" class="a"></div>
 <div class="seg" style="left:142px;top:23px;width:117px"><span style="left:0;width:59px;background:#e4e4e4"></span><span style="left:59px;width:58px;background:#fff"></span><span style="left:10px;top:1px;background:none">Model</span><span style="left:72px;top:1px;background:none">Tasks</span></div>
 <div id="tree" class="a">
<div class="row" style="top:14px"><i class="tri"></i><svg class="ic"><use href="#bluef"/></svg><span class="g">6X40M3</span></div>
<div class="row" style="top:34px"><i class="tri"></i><svg class="ic"><use href="#yel"/></svg><span class="d">INPUT</span></div>
<div class="row" style="top:54px"><i class="tri"></i><svg class="ic"><use href="#yel"/></svg><span class="d">Main L</span></div>
<div class="row" style="top:74px"><i class="tri"></i><svg class="ic"><use href="#yel"/></svg><span class="d">MainR</span></div>
<div class="row" style="top:94px"><i class="tri"></i><svg class="ic"><use href="#yelf"/></svg><span class="g">BTN</span></div>
<div class="row" style="top:114px"><i class="tri"></i><svg class="ic"><use href="#pagec"/></svg><span class="g">Page</span></div>
<div class="row" style="top:134px"><i class="tri"></i><svg class="ic"><use href="#pagec"/></svg><span class="g">BottomPage001</span></div>
<div class="row" style="top:154px"><i class="tri"></i><svg class="ic"><use href="#backc"/></svg><span class="g">BackPage002</span></div>
<div class="row" style="top:174px"><i class="tri"></i><svg class="ic"><use href="#page"/></svg><span class="g">FrontPage004</span></div>
<div class="row" style="top:194px"><i class="tri"></i><svg class="ic"><use href="#page"/></svg><span class="g">RightPage005</span></div>
<div class="row" style="top:214px"><i class="tri"></i><svg class="ic"><use href="#page"/></svg><span class="g">LeftPage006</span></div>
<div class="row" style="top:234px"><i class="tri"></i><svg class="ic"><use href="#bluef"/></svg><span class="g">Panel</span></div>
<div class="row" style="top:254px"><i class="tri"></i><svg class="ic"><use href="#pagec"/></svg><span class="g">Top009</span></div>
<div class="row" style="top:274px"><i class="tri"></i><svg class="ic"><use href="#page"/></svg><span class="g">Page008</span></div>
<div class="row" style="top:294px"><i class="tri"></i><svg class="ic"><use href="#page"/></svg><span class="g">Page009</span></div>
<div class="row" style="top:314px"><i class="tri"></i><svg class="ic"><use href="#page"/></svg><span class="g">Page010</span></div>
<div class="row" style="top:334px"><i class="tri"></i><svg class="ic"><use href="#blue"/></svg><span class="d">6X40M R</span></div>
<div class="row" style="top:354px"><i class="tri"></i><svg class="ic"><use href="#blue"/></svg><span class="d">6X40M L</span></div>
<div class="row" style="top:374px"><i class="tri"></i><svg class="ic"><use href="#pagec"/></svg><span class="g">Top</span></div>
<div class="row" style="top:394px"><i class="tri"></i><svg class="ic"><use href="#page"/></svg><span class="g">Page012</span></div>
<div class="row" style="top:414px"><i class="tri"></i><svg class="ic"><use href="#pagec"/></svg><span class="g">Page013</span></div>
<div class="row" style="top:434px"><i class="tri"></i><svg class="ic"><use href="#yelf"/></svg><span class="g">SW010</span></div>
<div class="row" style="top:454px"><i class="tri"></i><svg class="ic"><use href="#yelf"/></svg><span class="g">INPUT001</span></div>
<div class="row" style="top:474px"><i class="tri"></i><svg class="ic"><use href="#bluef"/></svg><span class="g">6X40M R001</span></div>
  <div id="thead" class="a"><span style="left:4px">Labels &amp; Attributes</span><span style="left:181px;top:1px;height:14px;border-left:1px solid #c8c8c8"></span><span style="left:185px">Description</span><span style="left:281px;top:1px;height:14px;border-left:1px solid #c8c8c8"></span></div>
  <div id="sbtrack" class="a"></div>
  <div id="sbthumb" class="a"></div>
 </div>
 <div class="a" style="left:197px;top:532px;width:7px;height:7px;border-radius:50%;background:#bdbdbd"></div>
 <div id="prop" class="a">
<div class="prow" style="top:38px"></div>
<div class="prow" style="top:80px"></div>
<div class="prow" style="top:122px"></div>
<div class="prow" style="top:164px"></div>
<div class="prow" style="top:206px"></div>
<div class="prow" style="top:248px"></div>
<div class="prow" style="top:290px"></div>
<div class="prow" style="top:332px"></div>
<div class="prow" style="top:374px"></div>
<div class="prow" style="top:416px"></div>
<div class="prow" style="top:458px"></div>
<div class="prow" style="top:500px"></div>
  <div id="phead" class="a"><span style="left:4px">Property</span><span style="left:99px;top:1px;height:15px;border-left:1px solid #c8c8c8"></span><span style="left:103px">Value</span></div>
 </div>
 <div id="pframe" class="a"></div>
 <div class="seg" style="left:148px;top:1079px;width:103px"><span style="left:0;width:52px;background:#fff"></span><span style="left:52px;width:51px;background:#e4e4e4"></span><span style="left:10px;top:1px;background:none">View</span><span style="left:63px;top:1px;background:none">Data</span></div>
</div>
<div id="view" class="a"></div>
<svg class="a" style="left:0;top:0" width="2106" height="1254" viewBox="0 0 2106 1254">
<defs>
<linearGradient id="tubeG" x1="0" x2="1"><stop offset="0" stop-color="#5a5a5a"/><stop offset="0.35" stop-color="#6e6e6e"/><stop offset="0.8" stop-color="#4a4a4a"/><stop offset="1" stop-color="#3a3a3a"/></linearGradient>
<linearGradient id="glassG" x1="0" x2="1"><stop offset="0" stop-color="#d4d4d8"/><stop offset="0.5" stop-color="#e6e6ea"/><stop offset="1" stop-color="#d0d0d4"/></linearGradient>
<linearGradient id="brassG" x1="0" y1="0" x2="0" y2="1"><stop offset="0" stop-color="#d09a38"/><stop offset="0.5" stop-color="#b07c20"/><stop offset="1" stop-color="#8a5e14"/></linearGradient>
<linearGradient id="longG" x1="0" y1="0" x2="0" y2="1"><stop offset="0" stop-color="#f4f4f7"/><stop offset="1" stop-color="#ffffff"/></linearGradient>
</defs>
<polygon points="1014.0,451.0 1521.0,634.0 1205.0,815.0 702.0,633.0" fill="#d6d6dc" stroke="none" stroke-width="1" />
<polygon points="1014.0,577.0 1521.0,760.0 1209.0,942.0 702.0,759.0" fill="#fbfbfc" stroke="none" stroke-width="1" />
<polygon points="1014.0,451.0 1521.0,634.0 1521.0,760.0 1014.0,577.0" fill="#dcdcdf" stroke="none" stroke-width="1" />
<polygon points="1014.0,451.0 702.0,633.0 702.0,759.0 1014.0,577.0" fill="#d4d4d6" stroke="none" stroke-width="1" />
<line x1="1014.0" y1="577.0" x2="702.0" y2="759.0" stroke="#a6a6ac" stroke-width="1.2"/>
<line x1="1014.0" y1="577.0" x2="1521.0" y2="760.0" stroke="#a6a6ac" stroke-width="1.2"/>
<line x1="1014.0" y1="577.0" x2="1015.0" y2="485.0" stroke="#a8a8ae" stroke-width="1.4"/>
<polyline points="1000.0,490.0 995.0,540.0 977.0,565.0 925.0,597.0" fill="none" stroke="#b4b4ba" stroke-width="1"/>
<polyline points="1030.0,490.0 1035.0,540.0 1060.0,570.0 1100.0,590.0" fill="none" stroke="#b8b8be" stroke-width="1"/>
<line x1="1015.0" y1="500.0" x2="748.0" y2="656.0" stroke="#b8b8be" stroke-width="1"/>
<polygon points="795.0,714.0 1083.0,816.0 1090.0,853.0 1205.0,895.0 1209.0,942.0 690.0,753.0 697.0,637.0 900.0,710.0" fill="#fbfbfc" stroke="none" stroke-width="1" />
<line x1="710.0" y1="745.0" x2="806.0" y2="689.0" stroke="#8a8a8e" stroke-width="1.2"/>
<line x1="722.0" y1="748.0" x2="820.0" y2="692.0" stroke="#a0a0a4" stroke-width="1"/>
<line x1="681.0" y1="731.0" x2="770.0" y2="684.0" stroke="#d0d0d4" stroke-width="1"/>
<polygon points="933.0,635.0 1020.0,583.0 1319.0,678.0 1216.0,736.0" fill="#a6c6a9" stroke="#8fae93" stroke-width="1" />
<polygon points="795.0,714.0 886.0,652.0 1181.0,757.0 1083.0,816.0" fill="#a6c6a9" stroke="#8fae93" stroke-width="1" />
<polygon points="1090.0,853.0 1360.0,697.0 1475.0,738.0 1205.0,895.0" fill="#a6c6a9" stroke="#8fae93" stroke-width="1" />
<polygon points="933.0,635.0 1216.0,736.0 1181.0,757.0 886.0,652.0" fill="#e6e6ea" stroke="none" stroke-width="1" />
<circle cx="974.3" cy="755.1" r="1" fill="#8eaa92"/>
<circle cx="1004.2" cy="753.3" r="1" fill="#8eaa92"/>
<circle cx="871.1" cy="682.0" r="1" fill="#8eaa92"/>
<circle cx="1037.5" cy="798.6" r="1" fill="#8eaa92"/>
<circle cx="886.5" cy="722.0" r="1" fill="#8eaa92"/>
<circle cx="1024.3" cy="701.6" r="1" fill="#8eaa92"/>
<circle cx="1011.1" cy="711.9" r="1" fill="#8eaa92"/>
<circle cx="897.2" cy="690.0" r="1" fill="#8eaa92"/>
<circle cx="1106.6" cy="764.8" r="1" fill="#8eaa92"/>
<circle cx="1058.8" cy="758.3" r="1" fill="#8eaa92"/>
<circle cx="874.8" cy="679.0" r="1" fill="#8eaa92"/>
<circle cx="1037.4" cy="728.6" r="1" fill="#8eaa92"/>
<circle cx="831.4" cy="698.5" r="1" fill="#8eaa92"/>
<circle cx="1012.8" cy="709.8" r="1" fill="#8eaa92"/>
<circle cx="1117.9" cy="761.0" r="1" fill="#8eaa92"/>
<circle cx="1129.9" cy="765.6" r="1" fill="#8eaa92"/>
<circle cx="1063.8" cy="772.2" r="1" fill="#8eaa92"/>
<circle cx="1107.8" cy="783.1" r="1" fill="#8eaa92"/>
<circle cx="903.6" cy="669.7" r="1" fill="#8eaa92"/>
<circle cx="870.1" cy="727.8" r="1" fill="#8eaa92"/>
<circle cx="1011.4" cy="699.9" r="1" fill="#8eaa92"/>
<circle cx="940.0" cy="706.4" r="1" fill="#8eaa92"/>
<circle cx="953.7" cy="722.5" r="1" fill="#8eaa92"/>
<circle cx="996.9" cy="752.5" r="1" fill="#8eaa92"/>
<circle cx="1112.3" cy="771.6" r="1" fill="#8eaa92"/>
<circle cx="1129.0" cy="768.4" r="1" fill="#8eaa92"/>
<circle cx="1164.3" cy="764.5" r="1" fill="#8eaa92"/>
<circle cx="903.8" cy="689.3" r="1" fill="#8eaa92"/>
<circle cx="1156.9" cy="761.5" r="1" fill="#8eaa92"/>
<circle cx="1044.8" cy="717.5" r="1" fill="#8eaa92"/>
<circle cx="921.8" cy="691.7" r="1" fill="#8eaa92"/>
<circle cx="1039.2" cy="722.4" r="1" fill="#8eaa92"/>
<circle cx="839.3" cy="702.9" r="1" fill="#8eaa92"/>
<circle cx="1163.7" cy="764.6" r="1" fill="#8eaa92"/>
<circle cx="1034.1" cy="790.4" r="1" fill="#8eaa92"/>
<circle cx="876.2" cy="704.1" r="1" fill="#8eaa92"/>
<circle cx="1044.7" cy="774.9" r="1" fill="#8eaa92"/>
<circle cx="887.4" cy="664.5" r="1" fill="#8eaa92"/>
<circle cx="864.1" cy="680.6" r="1" fill="#8eaa92"/>
<circle cx="957.4" cy="703.9" r="1" fill="#8eaa92"/>
<circle cx="1163.6" cy="762.0" r="1" fill="#8eaa92"/>
<circle cx="1132.1" cy="786.0" r="1" fill="#8eaa92"/>
<circle cx="845.5" cy="702.7" r="1" fill="#8eaa92"/>
<circle cx="858.7" cy="680.1" r="1" fill="#8eaa92"/>
<circle cx="931.0" cy="743.6" r="1" fill="#8eaa92"/>
<circle cx="896.2" cy="692.4" r="1" fill="#8eaa92"/>
<circle cx="1049.0" cy="800.0" r="1" fill="#8eaa92"/>
<circle cx="1101.8" cy="793.2" r="1" fill="#8eaa92"/>
<circle cx="987.8" cy="698.0" r="1" fill="#8eaa92"/>
<circle cx="988.4" cy="739.2" r="1" fill="#8eaa92"/>
<circle cx="1027.8" cy="736.0" r="1" fill="#8eaa92"/>
<circle cx="1026.9" cy="743.6" r="1" fill="#8eaa92"/>
<circle cx="1030.0" cy="708.8" r="1" fill="#8eaa92"/>
<circle cx="1043.9" cy="761.7" r="1" fill="#8eaa92"/>
<circle cx="903.8" cy="730.2" r="1" fill="#8eaa92"/>
<circle cx="1037.6" cy="708.1" r="1" fill="#8eaa92"/>
<circle cx="848.3" cy="681.2" r="1" fill="#8eaa92"/>
<circle cx="1001.5" cy="748.1" r="1" fill="#8eaa92"/>
<circle cx="974.3" cy="775.6" r="1" fill="#8eaa92"/>
<circle cx="870.1" cy="681.0" r="1" fill="#8eaa92"/>
<circle cx="988.4" cy="723.5" r="1" fill="#8eaa92"/>
<circle cx="960.0" cy="708.6" r="1" fill="#8eaa92"/>
<circle cx="1075.5" cy="747.0" r="1" fill="#8eaa92"/>
<circle cx="814.5" cy="718.8" r="1" fill="#8eaa92"/>
<circle cx="1138.5" cy="772.3" r="1" fill="#8eaa92"/>
<circle cx="950.1" cy="745.3" r="1" fill="#8eaa92"/>
<circle cx="942.4" cy="710.5" r="1" fill="#8eaa92"/>
<circle cx="919.0" cy="723.7" r="1" fill="#8eaa92"/>
<circle cx="1001.7" cy="752.5" r="1" fill="#8eaa92"/>
<circle cx="931.8" cy="734.2" r="1" fill="#8eaa92"/>
<circle cx="1008.1" cy="597.4" r="1" fill="#8eaa92"/>
<circle cx="1197.3" cy="677.1" r="1" fill="#8eaa92"/>
<circle cx="1024.1" cy="640.9" r="1" fill="#8eaa92"/>
<circle cx="1073.6" cy="616.2" r="1" fill="#8eaa92"/>
<circle cx="1073.8" cy="668.7" r="1" fill="#8eaa92"/>
<circle cx="1023.7" cy="608.6" r="1" fill="#8eaa92"/>
<circle cx="1057.2" cy="651.3" r="1" fill="#8eaa92"/>
<circle cx="1135.4" cy="633.7" r="1" fill="#8eaa92"/>
<circle cx="1057.7" cy="606.7" r="1" fill="#8eaa92"/>
<circle cx="1149.8" cy="681.9" r="1" fill="#8eaa92"/>
<circle cx="1144.0" cy="632.2" r="1" fill="#8eaa92"/>
<circle cx="987.2" cy="635.3" r="1" fill="#8eaa92"/>
<circle cx="1034.7" cy="626.1" r="1" fill="#8eaa92"/>
<circle cx="1251.3" cy="673.7" r="1" fill="#8eaa92"/>
<circle cx="1028.6" cy="653.3" r="1" fill="#8eaa92"/>
<circle cx="1193.2" cy="654.8" r="1" fill="#8eaa92"/>
<circle cx="1105.3" cy="626.3" r="1" fill="#8eaa92"/>
<circle cx="1027.5" cy="657.5" r="1" fill="#8eaa92"/>
<circle cx="1082.3" cy="619.8" r="1" fill="#8eaa92"/>
<circle cx="1083.4" cy="658.2" r="1" fill="#8eaa92"/>
<circle cx="1088.2" cy="653.5" r="1" fill="#8eaa92"/>
<circle cx="1059.5" cy="602.0" r="1" fill="#8eaa92"/>
<circle cx="1200.4" cy="730.0" r="1" fill="#8eaa92"/>
<circle cx="1302.8" cy="683.7" r="1" fill="#8eaa92"/>
<circle cx="1246.3" cy="705.9" r="1" fill="#8eaa92"/>
<circle cx="1079.8" cy="608.0" r="1" fill="#8eaa92"/>
<circle cx="1244.6" cy="677.0" r="1" fill="#8eaa92"/>
<circle cx="1143.1" cy="650.9" r="1" fill="#8eaa92"/>
<circle cx="1056.2" cy="653.8" r="1" fill="#8eaa92"/>
<circle cx="972.3" cy="630.0" r="1" fill="#8eaa92"/>
<circle cx="1068.1" cy="632.4" r="1" fill="#8eaa92"/>
<circle cx="1016.8" cy="597.2" r="1" fill="#8eaa92"/>
<circle cx="1218.0" cy="654.3" r="1" fill="#8eaa92"/>
<circle cx="1280.4" cy="672.5" r="1" fill="#8eaa92"/>
<circle cx="1182.9" cy="643.4" r="1" fill="#8eaa92"/>
<circle cx="1145.2" cy="709.5" r="1" fill="#8eaa92"/>
<circle cx="1033.6" cy="656.0" r="1" fill="#8eaa92"/>
<circle cx="1144.8" cy="651.5" r="1" fill="#8eaa92"/>
<circle cx="1241.0" cy="706.0" r="1" fill="#8eaa92"/>
<circle cx="1086.2" cy="636.4" r="1" fill="#8eaa92"/>
<circle cx="1202.3" cy="707.6" r="1" fill="#8eaa92"/>
<circle cx="1201.9" cy="687.0" r="1" fill="#8eaa92"/>
<circle cx="1020.6" cy="636.2" r="1" fill="#8eaa92"/>
<circle cx="1217.7" cy="687.1" r="1" fill="#8eaa92"/>
<circle cx="1174.1" cy="705.2" r="1" fill="#8eaa92"/>
<circle cx="1253.2" cy="664.0" r="1" fill="#8eaa92"/>
<circle cx="1006.9" cy="592.9" r="1" fill="#8eaa92"/>
<circle cx="1240.5" cy="686.2" r="1" fill="#8eaa92"/>
<circle cx="1014.4" cy="659.7" r="1" fill="#8eaa92"/>
<circle cx="1107.8" cy="673.4" r="1" fill="#8eaa92"/>
<circle cx="1106.8" cy="659.6" r="1" fill="#8eaa92"/>
<circle cx="1001.1" cy="594.8" r="1" fill="#8eaa92"/>
<circle cx="973.8" cy="644.9" r="1" fill="#8eaa92"/>
<circle cx="963.3" cy="635.4" r="1" fill="#8eaa92"/>
<circle cx="1272.9" cy="665.6" r="1" fill="#8eaa92"/>
<circle cx="1083.3" cy="681.0" r="1" fill="#8eaa92"/>
<circle cx="1051.1" cy="649.7" r="1" fill="#8eaa92"/>
<circle cx="1150.3" cy="680.7" r="1" fill="#8eaa92"/>
<circle cx="1089.5" cy="639.7" r="1" fill="#8eaa92"/>
<circle cx="1043.7" cy="657.9" r="1" fill="#8eaa92"/>
<circle cx="1102.1" cy="684.3" r="1" fill="#8eaa92"/>
<circle cx="1107.3" cy="634.5" r="1" fill="#8eaa92"/>
<circle cx="990.7" cy="648.8" r="1" fill="#8eaa92"/>
<circle cx="1140.1" cy="675.3" r="1" fill="#8eaa92"/>
<circle cx="1113.5" cy="630.9" r="1" fill="#8eaa92"/>
<circle cx="1187.0" cy="653.3" r="1" fill="#8eaa92"/>
<circle cx="1078.5" cy="649.2" r="1" fill="#8eaa92"/>
<circle cx="1180.7" cy="678.1" r="1" fill="#8eaa92"/>
<circle cx="1170.7" cy="681.5" r="1" fill="#8eaa92"/>
<circle cx="1044.3" cy="635.1" r="1" fill="#8eaa92"/>
<circle cx="1314.6" cy="798.2" r="1" fill="#8eaa92"/>
<circle cx="1158.2" cy="859.6" r="1" fill="#8eaa92"/>
<circle cx="1306.1" cy="823.1" r="1" fill="#8eaa92"/>
<circle cx="1385.9" cy="722.3" r="1" fill="#8eaa92"/>
<circle cx="1423.4" cy="745.4" r="1" fill="#8eaa92"/>
<circle cx="1214.2" cy="831.5" r="1" fill="#8eaa92"/>
<circle cx="1216.8" cy="867.8" r="1" fill="#8eaa92"/>
<circle cx="1370.9" cy="786.4" r="1" fill="#8eaa92"/>
<circle cx="1380.7" cy="756.9" r="1" fill="#8eaa92"/>
<circle cx="1353.0" cy="761.8" r="1" fill="#8eaa92"/>
<circle cx="1185.4" cy="861.5" r="1" fill="#8eaa92"/>
<circle cx="1107.8" cy="858.3" r="1" fill="#8eaa92"/>
<circle cx="1304.2" cy="734.0" r="1" fill="#8eaa92"/>
<circle cx="1126.2" cy="842.8" r="1" fill="#8eaa92"/>
<circle cx="1348.3" cy="723.0" r="1" fill="#8eaa92"/>
<circle cx="1193.1" cy="884.7" r="1" fill="#8eaa92"/>
<circle cx="1219.8" cy="869.4" r="1" fill="#8eaa92"/>
<circle cx="1368.0" cy="782.5" r="1" fill="#8eaa92"/>
<circle cx="1413.7" cy="728.2" r="1" fill="#8eaa92"/>
<circle cx="1309.8" cy="729.9" r="1" fill="#8eaa92"/>
<circle cx="1356.0" cy="754.4" r="1" fill="#8eaa92"/>
<circle cx="1295.4" cy="745.8" r="1" fill="#8eaa92"/>
<circle cx="1399.7" cy="774.7" r="1" fill="#8eaa92"/>
<circle cx="1143.8" cy="857.1" r="1" fill="#8eaa92"/>
<circle cx="1337.5" cy="799.3" r="1" fill="#8eaa92"/>
<circle cx="1176.0" cy="822.7" r="1" fill="#8eaa92"/>
<circle cx="1228.3" cy="839.7" r="1" fill="#8eaa92"/>
<circle cx="1338.7" cy="751.7" r="1" fill="#8eaa92"/>
<circle cx="1234.8" cy="812.2" r="1" fill="#8eaa92"/>
<circle cx="1232.7" cy="815.8" r="1" fill="#8eaa92"/>
<circle cx="1170.0" cy="861.0" r="1" fill="#8eaa92"/>
<circle cx="1400.2" cy="718.1" r="1" fill="#8eaa92"/>
<circle cx="1310.3" cy="743.0" r="1" fill="#8eaa92"/>
<circle cx="1363.5" cy="776.5" r="1" fill="#8eaa92"/>
<circle cx="1331.4" cy="769.2" r="1" fill="#8eaa92"/>
<circle cx="1294.5" cy="804.2" r="1" fill="#8eaa92"/>
<circle cx="1349.5" cy="719.1" r="1" fill="#8eaa92"/>
<circle cx="1201.9" cy="869.4" r="1" fill="#8eaa92"/>
<circle cx="1397.0" cy="731.3" r="1" fill="#8eaa92"/>
<circle cx="1292.3" cy="813.8" r="1" fill="#8eaa92"/>
<circle cx="1171.0" cy="835.1" r="1" fill="#8eaa92"/>
<circle cx="1211.1" cy="846.4" r="1" fill="#8eaa92"/>
<circle cx="1201.7" cy="813.6" r="1" fill="#8eaa92"/>
<circle cx="1386.2" cy="784.6" r="1" fill="#8eaa92"/>
<circle cx="1251.0" cy="836.3" r="1" fill="#8eaa92"/>
<circle cx="1299.7" cy="824.0" r="1" fill="#8eaa92"/>
<circle cx="1278.6" cy="772.9" r="1" fill="#8eaa92"/>
<circle cx="1151.4" cy="820.0" r="1" fill="#8eaa92"/>
<circle cx="1263.5" cy="794.1" r="1" fill="#8eaa92"/>
<circle cx="1178.0" cy="841.2" r="1" fill="#8eaa92"/>
<circle cx="1266.0" cy="835.0" r="1" fill="#8eaa92"/>
<circle cx="1242.8" cy="872.1" r="1" fill="#8eaa92"/>
<circle cx="1288.4" cy="803.1" r="1" fill="#8eaa92"/>
<circle cx="1312.4" cy="814.6" r="1" fill="#8eaa92"/>
<circle cx="1375.9" cy="747.8" r="1" fill="#8eaa92"/>
<circle cx="1302.8" cy="807.8" r="1" fill="#8eaa92"/>
<circle cx="1367.3" cy="735.8" r="1" fill="#8eaa92"/>
<circle cx="1398.5" cy="778.2" r="1" fill="#8eaa92"/>
<circle cx="1242.6" cy="789.6" r="1" fill="#8eaa92"/>
<circle cx="1235.9" cy="846.3" r="1" fill="#8eaa92"/>
<circle cx="1382.6" cy="787.3" r="1" fill="#8eaa92"/>
<circle cx="1348.4" cy="729.8" r="1" fill="#8eaa92"/>
<circle cx="1170.9" cy="834.2" r="1" fill="#8eaa92"/>
<circle cx="1221.6" cy="853.3" r="1" fill="#8eaa92"/>
<circle cx="1425.3" cy="756.1" r="1" fill="#8eaa92"/>
<circle cx="1258.3" cy="849.3" r="1" fill="#8eaa92"/>
<circle cx="1223.3" cy="821.8" r="1" fill="#8eaa92"/>
<circle cx="1296.7" cy="742.8" r="1" fill="#8eaa92"/>
<circle cx="1210.9" cy="873.5" r="1" fill="#8eaa92"/>
<circle cx="1209.8" cy="822.4" r="1" fill="#8eaa92"/>
<polygon points="1262.0,708.0 1290.0,698.0 1292.0,720.0 1264.0,730.0" fill="#9a9a9e" stroke="none" stroke-width="1" opacity="0.6" />
<path d="M793,741 L796,738 L799,741 L796,743 Z M796,743 V751" fill="#e8e8ea" stroke="#8a8a8e" stroke-width="1"/>
<path d="M808,755 L811,752 L814,755 L811,757 Z M811,757 V765" fill="#e8e8ea" stroke="#8a8a8e" stroke-width="1"/>
<path d="M839,792 L842,789 L845,792 L842,794 Z M842,794 V802" fill="#e8e8ea" stroke="#8a8a8e" stroke-width="1"/>
<path d="M960,836 L963,833 L966,836 L963,838 Z M963,838 V846" fill="#e8e8ea" stroke="#8a8a8e" stroke-width="1"/>
<path d="M1072,851 L1075,848 L1078,851 L1075,853 Z M1075,853 V861" fill="#e8e8ea" stroke="#8a8a8e" stroke-width="1"/>
<path d="M1083,879 L1086,876 L1089,879 L1086,881 Z M1086,881 V889" fill="#e8e8ea" stroke="#8a8a8e" stroke-width="1"/>
<path d="M1211,770 L1214,767 L1217,770 L1214,772 Z M1214,772 V780" fill="#e8e8ea" stroke="#8a8a8e" stroke-width="1"/>
<path d="M1297,716 L1300,713 L1303,716 L1300,718 Z M1300,718 V726" fill="#e8e8ea" stroke="#8a8a8e" stroke-width="1"/>
<path d="M1302,770 L1305,767 L1308,770 L1305,772 Z M1305,772 V780" fill="#e8e8ea" stroke="#8a8a8e" stroke-width="1"/>
<polygon points="1165,868 1182,861 1190,866 1173,873" fill="#f0f0f0" stroke="#777" stroke-width="1"/>
<rect x="1120" y="850" width="6" height="4" fill="#94ac98" transform="rotate(-30 1120 850)"/>
<rect x="1140" y="845" width="6" height="4" fill="#94ac98" transform="rotate(-30 1140 845)"/>
<rect x="1150" y="870" width="6" height="4" fill="#94ac98" transform="rotate(-30 1150 870)"/>
<rect x="1130" y="872" width="6" height="4" fill="#94ac98" transform="rotate(-30 1130 872)"/>
<rect x="1160" y="840" width="6" height="4" fill="#94ac98" transform="rotate(-30 1160 840)"/>
<rect x="1105" y="858" width="6" height="4" fill="#94ac98" transform="rotate(-30 1105 858)"/>
<path d="M1032,563 V627 A21,7 0 0 0 1074,627 V563 Z" fill="url(#glassG)" stroke="#a8a8ae" stroke-width="1"/>
<path d="M1113,593 V657 A21,7 0 0 0 1155,657 V593 Z" fill="url(#glassG)" stroke="#a8a8ae" stroke-width="1"/>
<path d="M1194,623 V687 A21,7 0 0 0 1236,687 V623 Z" fill="url(#glassG)" stroke="#a8a8ae" stroke-width="1"/>
<path d="M894,644 V708 A21,7 0 0 0 936,708 V644 Z" fill="url(#glassG)" stroke="#a8a8ae" stroke-width="1"/>
<path d="M974,673 V737 A21,7 0 0 0 1016,737 V673 Z" fill="url(#glassG)" stroke="#a8a8ae" stroke-width="1"/>
<path d="M1055,703 V767 A21,7 0 0 0 1097,767 V703 Z" fill="url(#glassG)" stroke="#a8a8ae" stroke-width="1"/>
<polygon points="1014.0,451.0 1521.0,634.0 1205.0,815.0 702.0,633.0" fill="#b6b6b8" stroke="none" stroke-width="1" opacity="0.38" />
<polygon points="1014.0,451.0 702.0,633.0 728.8,648.4 1014.0,482.0" fill="#dedee0" stroke="none" stroke-width="1" />
<polygon points="1014.0,451.0 1521.0,634.0 1483.1,653.3 1014.0,484.0" fill="#dfdfe2" stroke="none" stroke-width="1" />
<line x1="1014.0" y1="459.0" x2="704.4" y2="639.6" stroke="#a4a4aa" stroke-width="1.3"/>
<line x1="1014.0" y1="462.0" x2="707.5" y2="640.8" stroke="#b4b4ba" stroke-width="1"/>
<line x1="1014.0" y1="472.0" x2="718.2" y2="644.6" stroke="#9c9ca2" stroke-width="1.3"/>
<line x1="1014.0" y1="482.0" x2="728.8" y2="648.4" stroke="#a8a8ae" stroke-width="1.1"/>
<line x1="1014.0" y1="458.0" x2="1510.5" y2="637.2" stroke="#a4a4aa" stroke-width="1.3"/>
<line x1="1014.0" y1="463.0" x2="1505.3" y2="640.3" stroke="#b4b4ba" stroke-width="1"/>
<line x1="1014.0" y1="473.0" x2="1494.7" y2="646.5" stroke="#9c9ca2" stroke-width="1.3"/>
<line x1="1014.0" y1="484.0" x2="1483.1" y2="653.3" stroke="#a8a8ae" stroke-width="1.1"/>
<line x1="1014.0" y1="457.0" x2="1014.0" y2="485.0" stroke="#b0b0b6" stroke-width="1"/>
<ellipse cx="1053" cy="563" rx="29" ry="8.5" fill="none" stroke="#e8e8ec" stroke-width="3.5"/>
<ellipse cx="1053" cy="563" rx="31" ry="10" fill="none" stroke="#a0a0a6" stroke-width="0.9"/>
<ellipse cx="1053" cy="563" rx="27" ry="7" fill="none" stroke="#b4b4ba" stroke-width="0.8"/>
<ellipse cx="1053" cy="547" rx="34" ry="13" fill="#dcdce0" stroke="#111" stroke-width="1.4"/>
<ellipse cx="1053" cy="550" rx="28" ry="10" fill="none" stroke="#111" stroke-width="1.1"/>
<ellipse cx="1053" cy="552" rx="24" ry="8" fill="#e4e4e8" stroke="#111" stroke-width="1"/>
<ellipse cx="1072" cy="555" rx="3" ry="3" fill="#2e4e34"/>
<path d="M1032,561 V517 C1032,503 1045,500 1053,500 C1061,500 1074,503 1074,517 V561 A21,6 0 0 1 1032,561 Z" fill="url(#tubeG)" stroke="#151515" stroke-width="1.5"/>
<path d="M1032,521 A21,6 0 0 0 1074,521" fill="none" stroke="#151515" stroke-width="1.4"/>
<path d="M1057,493 C1067,503 1069,509 1068,521 V563" fill="none" stroke="#151515" stroke-width="1.6"/>
<path d="M1045,504 L1053,491 L1061,504 A8,3 0 0 1 1045,504 Z" fill="#6a6a6a" stroke="#151515" stroke-width="1.2"/>
<ellipse cx="1134" cy="593" rx="29" ry="8.5" fill="none" stroke="#e8e8ec" stroke-width="3.5"/>
<ellipse cx="1134" cy="593" rx="31" ry="10" fill="none" stroke="#a0a0a6" stroke-width="0.9"/>
<ellipse cx="1134" cy="593" rx="27" ry="7" fill="none" stroke="#b4b4ba" stroke-width="0.8"/>
<ellipse cx="1134" cy="577" rx="34" ry="13" fill="#dcdce0" stroke="#111" stroke-width="1.4"/>
<ellipse cx="1134" cy="580" rx="28" ry="10" fill="none" stroke="#111" stroke-width="1.1"/>
<ellipse cx="1134" cy="582" rx="24" ry="8" fill="#e4e4e8" stroke="#111" stroke-width="1"/>
<ellipse cx="1153" cy="585" rx="3" ry="3" fill="#2e4e34"/>
<path d="M1113,591 V547 C1113,533 1126,530 1134,530 C1142,530 1155,533 1155,547 V591 A21,6 0 0 1 1113,591 Z" fill="url(#tubeG)" stroke="#151515" stroke-width="1.5"/>
<path d="M1113,551 A21,6 0 0 0 1155,551" fill="none" stroke="#151515" stroke-width="1.4"/>
<path d="M1138,523 C1148,533 1150,539 1149,551 V593" fill="none" stroke="#151515" stroke-width="1.6"/>
<path d="M1126,534 L1134,521 L1142,534 A8,3 0 0 1 1126,534 Z" fill="#6a6a6a" stroke="#151515" stroke-width="1.2"/>
<ellipse cx="1215" cy="623" rx="29" ry="8.5" fill="none" stroke="#e8e8ec" stroke-width="3.5"/>
<ellipse cx="1215" cy="623" rx="31" ry="10" fill="none" stroke="#a0a0a6" stroke-width="0.9"/>
<ellipse cx="1215" cy="623" rx="27" ry="7" fill="none" stroke="#b4b4ba" stroke-width="0.8"/>
<ellipse cx="1215" cy="607" rx="34" ry="13" fill="#dcdce0" stroke="#111" stroke-width="1.4"/>
<ellipse cx="1215" cy="610" rx="28" ry="10" fill="none" stroke="#111" stroke-width="1.1"/>
<ellipse cx="1215" cy="612" rx="24" ry="8" fill="#e4e4e8" stroke="#111" stroke-width="1"/>
<ellipse cx="1234" cy="615" rx="3" ry="3" fill="#2e4e34"/>
<path d="M1194,621 V577 C1194,563 1207,560 1215,560 C1223,560 1236,563 1236,577 V621 A21,6 0 0 1 1194,621 Z" fill="url(#tubeG)" stroke="#151515" stroke-width="1.5"/>
<path d="M1194,581 A21,6 0 0 0 1236,581" fill="none" stroke="#151515" stroke-width="1.4"/>
<path d="M1219,553 C1229,563 1231,569 1230,581 V623" fill="none" stroke="#151515" stroke-width="1.6"/>
<path d="M1207,564 L1215,551 L1223,564 A8,3 0 0 1 1207,564 Z" fill="#6a6a6a" stroke="#151515" stroke-width="1.2"/>
<ellipse cx="915" cy="644" rx="29" ry="8.5" fill="none" stroke="#e8e8ec" stroke-width="3.5"/>
<ellipse cx="915" cy="644" rx="31" ry="10" fill="none" stroke="#a0a0a6" stroke-width="0.9"/>
<ellipse cx="915" cy="644" rx="27" ry="7" fill="none" stroke="#b4b4ba" stroke-width="0.8"/>
<ellipse cx="915" cy="628" rx="34" ry="13" fill="#dcdce0" stroke="#111" stroke-width="1.4"/>
<ellipse cx="915" cy="631" rx="28" ry="10" fill="none" stroke="#111" stroke-width="1.1"/>
<ellipse cx="915" cy="633" rx="24" ry="8" fill="#e4e4e8" stroke="#111" stroke-width="1"/>
<ellipse cx="934" cy="636" rx="3" ry="3" fill="#2e4e34"/>
<path d="M894,642 V598 C894,584 907,581 915,581 C923,581 936,584 936,598 V642 A21,6 0 0 1 894,642 Z" fill="url(#tubeG)" stroke="#151515" stroke-width="1.5"/>
<path d="M894,602 A21,6 0 0 0 936,602" fill="none" stroke="#151515" stroke-width="1.4"/>
<path d="M919,574 C929,584 931,590 930,602 V644" fill="none" stroke="#151515" stroke-width="1.6"/>
<path d="M907,585 L915,572 L923,585 A8,3 0 0 1 907,585 Z" fill="#6a6a6a" stroke="#151515" stroke-width="1.2"/>
<ellipse cx="995" cy="673" rx="29" ry="8.5" fill="none" stroke="#e8e8ec" stroke-width="3.5"/>
<ellipse cx="995" cy="673" rx="31" ry="10" fill="none" stroke="#a0a0a6" stroke-width="0.9"/>
<ellipse cx="995" cy="673" rx="27" ry="7" fill="none" stroke="#b4b4ba" stroke-width="0.8"/>
<ellipse cx="995" cy="657" rx="34" ry="13" fill="#dcdce0" stroke="#111" stroke-width="1.4"/>
<ellipse cx="995" cy="660" rx="28" ry="10" fill="none" stroke="#111" stroke-width="1.1"/>
<ellipse cx="995" cy="662" rx="24" ry="8" fill="#e4e4e8" stroke="#111" stroke-width="1"/>
<ellipse cx="1014" cy="665" rx="3" ry="3" fill="#2e4e34"/>
<path d="M974,671 V627 C974,613 987,610 995,610 C1003,610 1016,613 1016,627 V671 A21,6 0 0 1 974,671 Z" fill="url(#tubeG)" stroke="#151515" stroke-width="1.5"/>
<path d="M974,631 A21,6 0 0 0 1016,631" fill="none" stroke="#151515" stroke-width="1.4"/>
<path d="M999,603 C1009,613 1011,619 1010,631 V673" fill="none" stroke="#151515" stroke-width="1.6"/>
<path d="M987,614 L995,601 L1003,614 A8,3 0 0 1 987,614 Z" fill="#6a6a6a" stroke="#151515" stroke-width="1.2"/>
<ellipse cx="1076" cy="703" rx="29" ry="8.5" fill="none" stroke="#e8e8ec" stroke-width="3.5"/>
<ellipse cx="1076" cy="703" rx="31" ry="10" fill="none" stroke="#a0a0a6" stroke-width="0.9"/>
<ellipse cx="1076" cy="703" rx="27" ry="7" fill="none" stroke="#b4b4ba" stroke-width="0.8"/>
<ellipse cx="1076" cy="687" rx="34" ry="13" fill="#dcdce0" stroke="#111" stroke-width="1.4"/>
<ellipse cx="1076" cy="690" rx="28" ry="10" fill="none" stroke="#111" stroke-width="1.1"/>
<ellipse cx="1076" cy="692" rx="24" ry="8" fill="#e4e4e8" stroke="#111" stroke-width="1"/>
<ellipse cx="1095" cy="695" rx="3" ry="3" fill="#2e4e34"/>
<path d="M1055,701 V657 C1055,643 1068,640 1076,640 C1084,640 1097,643 1097,657 V701 A21,6 0 0 1 1055,701 Z" fill="url(#tubeG)" stroke="#151515" stroke-width="1.5"/>
<path d="M1055,661 A21,6 0 0 0 1097,661" fill="none" stroke="#151515" stroke-width="1.4"/>
<path d="M1080,633 C1090,643 1092,649 1091,661 V703" fill="none" stroke="#151515" stroke-width="1.6"/>
<path d="M1068,644 L1076,631 L1084,644 A8,3 0 0 1 1068,644 Z" fill="#6a6a6a" stroke="#151515" stroke-width="1.2"/>
<polygon points="858.0,672.0 868.0,668.0 868.0,684.0 858.0,688.0" fill="#e6e6ea" stroke="#333" stroke-width="1" />
<path d="M1128,515 h12 v14 h-12 z" fill="none" stroke="#222" stroke-width="1.2"/>
<path d="M1003,608 C1010,600 1025,598 1026,606 C1026,612 1015,614 1008,614" fill="none" stroke="#333" stroke-width="1.2"/>
<polygon points="698.0,645.0 1201.0,822.0 1193.0,935.0 690.0,752.0" fill="#ffffff" stroke="none" stroke-width="1" opacity="0.15" />
<polygon points="701.0,634.0 693.0,644.0 676.0,748.0 690.0,752.0 698.0,645.0" fill="#d4d4dc" stroke="none" stroke-width="1" />
<polyline points="705.0,650.0 708.0,746.0 1193.0,927.0" fill="none" stroke="#58585c" stroke-width="1.5"/>
<line x1="706.0" y1="736.8" x2="1194.0" y2="914.2" stroke="#909094" stroke-width="1.2"/>
<line x1="706.0" y1="755.8" x2="1194.0" y2="933.2" stroke="#3a3a3e" stroke-width="1.3"/>
<line x1="711.0" y1="745.0" x2="695.0" y2="752.0" stroke="#7a7a7e" stroke-width="1"/>
<polygon points="1208.0,822.0 1516.0,640.0 1519.0,759.0 1210.0,942.0" fill="#c6c6ce" stroke="none" stroke-width="1" opacity="0.6" />
<polygon points="1521.0,634.0 1538.0,732.0 1520.0,761.0 1519.0,759.0 1516.0,640.0" fill="#dcdce4" stroke="none" stroke-width="1" />
<line x1="1519.0" y1="735.0" x2="1538.0" y2="732.0" stroke="#777" stroke-width="1"/>
<polyline points="1222.0,925.0 1508.0,757.0 1505.0,652.0" fill="none" stroke="#8a8a8e" stroke-width="1"/>
<polyline points="1216.0,930.0 1512.0,758.0" fill="none" stroke="#7a7a7e" stroke-width="1.2"/>
<polyline points="1211.0,937.0 1517.0,757.0" fill="none" stroke="#ffffff" stroke-width="2"/>
<polyline points="1211.0,935.5 1517.0,755.5" fill="none" stroke="#111" stroke-width="1.3"/>
<polygon points="1305,779 1343,765 1343,813 1305,827" fill="#ece4d0" opacity="0.75"/>
<polygon points="1380,734 1418,720 1418,780 1380,794" fill="#ece4d0" opacity="0.75"/>
<polygon points="1440,702 1490,688 1490,733 1440,747" fill="#ece4d0" opacity="0.75"/>
<ellipse cx="1380" cy="790" rx="11.200000000000001" ry="14" fill="#e0e0e6" stroke="#a0a0a8" stroke-width="2" opacity="0.9"/>
<ellipse cx="1380" cy="790" rx="7.700000000000001" ry="9.799999999999999" fill="none" stroke="#b4b4bc" stroke-width="1"/>
<ellipse cx="1313" cy="829" rx="12.0" ry="15" fill="#e0e0e6" stroke="#a0a0a8" stroke-width="2" opacity="0.9"/>
<ellipse cx="1313" cy="829" rx="8.25" ry="10.5" fill="none" stroke="#b4b4bc" stroke-width="1"/>
<ellipse cx="1479" cy="712" rx="9" ry="14" fill="#e2e2e4" stroke="#c4c4c8" stroke-width="1.5"/>
<path d="M1480,700.5 L1499,707.5 L1499,730.5 L1480,723.5 A9,11.5 0 0 1 1480,700.5 Z" fill="url(#brassG)" stroke="#1a1208" stroke-width="1.4"/>
<ellipse cx="1499" cy="719" rx="8.5" ry="11.5" fill="#a27220" stroke="#1a1208" stroke-width="1.4"/>
<ellipse cx="1449" cy="729" rx="9" ry="14" fill="#e2e2e4" stroke="#c4c4c8" stroke-width="1.5"/>
<path d="M1450,717.5 L1469,724.5 L1469,747.5 L1450,740.5 A9,11.5 0 0 1 1450,717.5 Z" fill="url(#brassG)" stroke="#1a1208" stroke-width="1.4"/>
<ellipse cx="1469" cy="736" rx="8.5" ry="11.5" fill="#a27220" stroke="#1a1208" stroke-width="1.4"/>
<ellipse cx="1479" cy="744" rx="9" ry="14" fill="#e2e2e4" stroke="#c4c4c8" stroke-width="1.5"/>
<path d="M1480,732.5 L1499,739.5 L1499,762.5 L1480,755.5 A9,11.5 0 0 1 1480,732.5 Z" fill="url(#brassG)" stroke="#1a1208" stroke-width="1.4"/>
<ellipse cx="1499" cy="751" rx="8.5" ry="11.5" fill="#a27220" stroke="#1a1208" stroke-width="1.4"/>
<ellipse cx="1419" cy="749" rx="9" ry="14" fill="#e2e2e4" stroke="#c4c4c8" stroke-width="1.5"/>
<path d="M1420,737.5 L1439,744.5 L1439,767.5 L1420,760.5 A9,11.5 0 0 1 1420,737.5 Z" fill="url(#brassG)" stroke="#1a1208" stroke-width="1.4"/>
<ellipse cx="1439" cy="756" rx="8.5" ry="11.5" fill="#a27220" stroke="#1a1208" stroke-width="1.4"/>
<ellipse cx="1449" cy="759" rx="9" ry="14" fill="#e2e2e4" stroke="#c4c4c8" stroke-width="1.5"/>
<path d="M1450,747.5 L1469,754.5 L1469,777.5 L1450,770.5 A9,11.5 0 0 1 1450,747.5 Z" fill="url(#brassG)" stroke="#1a1208" stroke-width="1.4"/>
<ellipse cx="1469" cy="766" rx="8.5" ry="11.5" fill="#a27220" stroke="#1a1208" stroke-width="1.4"/>
<ellipse cx="1419" cy="780" rx="9" ry="14" fill="#e2e2e4" stroke="#c4c4c8" stroke-width="1.5"/>
<path d="M1420,768.5 L1439,775.5 L1439,798.5 L1420,791.5 A9,11.5 0 0 1 1420,768.5 Z" fill="url(#brassG)" stroke="#1a1208" stroke-width="1.4"/>
<ellipse cx="1439" cy="787" rx="8.5" ry="11.5" fill="#a27220" stroke="#1a1208" stroke-width="1.4"/>
<ellipse cx="1348" cy="789" rx="9" ry="14" fill="#e2e2e4" stroke="#c4c4c8" stroke-width="1.5"/>
<path d="M1349,777.5 L1368,784.5 L1368,807.5 L1349,800.5 A9,11.5 0 0 1 1349,777.5 Z" fill="url(#brassG)" stroke="#1a1208" stroke-width="1.4"/>
<ellipse cx="1368" cy="796" rx="8.5" ry="11.5" fill="#a27220" stroke="#1a1208" stroke-width="1.4"/>
<ellipse cx="1348" cy="821" rx="9" ry="14" fill="#e2e2e4" stroke="#c4c4c8" stroke-width="1.5"/>
<path d="M1349,809.5 L1368,816.5 L1368,839.5 L1349,832.5 A9,11.5 0 0 1 1349,809.5 Z" fill="url(#brassG)" stroke="#1a1208" stroke-width="1.4"/>
<ellipse cx="1368" cy="828" rx="8.5" ry="11.5" fill="#a27220" stroke="#1a1208" stroke-width="1.4"/>
<polygon points="1240.0,872.0 1275.0,859.0 1279.0,876.0 1243.0,895.0" fill="#2a2a2a" stroke="#111" stroke-width="1.4" />
<circle cx="1234" cy="889" r="2.5" fill="none" stroke="#111" stroke-width="1.2"/><circle cx="1282" cy="866" r="2.5" fill="none" stroke="#111" stroke-width="1.2"/>
<path d="M1291,863 l6,-3 M1294,858 v8" stroke="#111" stroke-width="2"/>
<ellipse cx="1216" cy="828" rx="3" ry="4" fill="none" stroke="#111" stroke-width="1.3"/>
<ellipse cx="1228" cy="822" rx="3" ry="4" fill="none" stroke="#111" stroke-width="1.3"/>
<ellipse cx="1459" cy="674" rx="3" ry="4" fill="none" stroke="#111" stroke-width="1.3"/>
<ellipse cx="1474" cy="668" rx="3" ry="4" fill="none" stroke="#111" stroke-width="1.3"/>
<ellipse cx="1380" cy="712" rx="3" ry="4" fill="none" stroke="#111" stroke-width="1.3"/>
<ellipse cx="1348" cy="746" rx="3" ry="4" fill="none" stroke="#111" stroke-width="1.3"/>
<ellipse cx="1345" cy="694" rx="3" ry="4" fill="none" stroke="#111" stroke-width="1.3"/>
<ellipse cx="1363" cy="727" rx="3" ry="4" fill="none" stroke="#111" stroke-width="1.3"/>
<ellipse cx="1504" cy="660" rx="3" ry="4" fill="none" stroke="#111" stroke-width="1.3"/>
<ellipse cx="1515" cy="654" rx="3" ry="4" fill="none" stroke="#111" stroke-width="1.3"/>
<ellipse cx="1358" cy="843" rx="3" ry="4" fill="none" stroke="#111" stroke-width="1.3"/>
<ellipse cx="1228" cy="916" rx="3" ry="4" fill="none" stroke="#111" stroke-width="1.3"/>
<polyline points="698.0,640.0 1203.0,822.0 1515.0,638.0" fill="none" stroke="#8a8a90" stroke-width="6"/>
<polyline points="697.0,636.0 1203.0,818.0 1516.0,634.0" fill="none" stroke="#0a0a0a" stroke-width="2.6"/>
<polyline points="699.0,644.0 1203.0,826.0 1514.0,643.0" fill="none" stroke="#151515" stroke-width="2.4"/>
<polyline points="699.0,640.5 1203.0,822.5 1515.0,638.5" fill="none" stroke="#d8d8dc" stroke-width="1.2"/>
<polygon points="1014.0,451.0 1521.0,634.0 1538.0,732.0 1520.0,761.0 1210.0,942.0 690.0,753.0 676.0,748.0 693.0,644.0 700.0,635.0" fill="none" stroke="#050505" stroke-width="2.1" />
<line x1="1201.0" y1="822.0" x2="1193.0" y2="935.0" stroke="#111" stroke-width="2.2"/>
<line x1="1208.0" y1="822.0" x2="1210.0" y2="942.0" stroke="#111" stroke-width="2.2"/>
<line x1="698.0" y1="645.0" x2="690.0" y2="752.0" stroke="#111" stroke-width="2"/>
<line x1="1516.0" y1="640.0" x2="1519.0" y2="759.0" stroke="#111" stroke-width="2"/>
</svg>
<div id="tabs" class="a"></div>
<svg class="a" style="left:0;top:0" width="2106" height="1254" viewBox="0 0 2106 1254">
<g fill="#c9c9e8">
<polygon points="2021.5,128.5 2033,118 2044.5,128.5"/>
<polygon points="2022,237 2044,237 2033,248"/>
<polygon points="1968,183 1979,172 1979,194.5"/>
<polygon points="2098,183 2087,172 2087,194.5"/>
<circle cx="2093" cy="123" r="6"/>
<path d="M2016,125 C2003,129 1993,136 1988,144 L1984,140 L1984,152 L1996,152 L1992,148 C1997,141 2006,135 2018,131 Z"/>
<path d="M2050,125 C2063,129 2073,136 2078,144 L2082,140 L2082,152 L2070,152 L2074,148 C2069,141 2060,135 2048,131 Z"/>
</g>
<g stroke="#1a1a30" stroke-width="1" stroke-linejoin="round">
<polygon points="1997,167 2031,151 2067,163 2066,178 2042,220 2036,222 2003,205 1999,176" fill="#dcdcf0" stroke="none"/>
<polygon points="1997,167 2031,151 2067,163 2036,172" fill="#e6e6f6"/>
<polygon points="1999,176 2031,181 2031,222 2003,205" fill="#d8d8ee"/>
<polygon points="2042,181 2066,169 2066,178 2042,220" fill="#dadaf0"/>
<polygon points="2031,181 2042,181 2042,220 2036,222 2031,222" fill="#e2e2f4"/>
<polygon points="2031,181 2036,169 2042,181" fill="#cfcfe6"/>
<path d="M1997,167 L2036,172 L2067,163" fill="none"/>
</g>
<polygon points="2056,227 2066,224 2075,227 2075,242 2066,245 2056,242" fill="#a8a8cc" stroke="#8888b0" stroke-width="0.8"/>
<polygon points="2080,232 2092,232 2086,238" fill="#8a8ab0"/>
<line x1="2051.5" y1="1138" x2="2051.5" y2="1112" stroke="#2a2a90" stroke-width="2.5"/>
<polygon points="2051.5,1101 2055,1115 2048,1115" fill="#2a2a90"/>
<line x1="2051" y1="1138" x2="2032" y2="1149" stroke="#a02020" stroke-width="2.2"/>
<polygon points="2023,1155 2032,1144 2037,1151" fill="#a02020"/>
<line x1="2052" y1="1138" x2="2074" y2="1145" stroke="#1e8a1e" stroke-width="2.2"/>
<polygon points="2085,1150 2072,1141 2071,1150" fill="#1e8a1e"/>
<text x="2052" y="1098" font-family="Liberation Sans" font-weight="bold" font-size="10" fill="#000">Z</text>
<text x="2088" y="1149" font-family="Liberation Sans" font-weight="bold" font-size="10" fill="#000">Y</text>
<text x="2022" y="1154" font-family="Liberation Sans" font-weight="bold" font-size="10" fill="#000">X</text>
</svg>
<div class="a" style="left:1040px;top:1193px;width:428px;height:20px;border:1px solid #c2c2c2;border-top:none;border-radius:0 0 5px 5px;background:#fff;overflow:hidden;font-size:13.2px;color:#111">
 <div class="a" style="left:0;top:0;width:176px;height:20px;background:#dcdcdc"></div>
 <div class="a" style="left:320px;top:0;width:1px;height:20px;background:#d4d4d4"></div>
 <svg class="a" style="left:0;top:0" width="428" height="20">
  <path d="M8,6 L15,13 M15,6 L8,13" stroke="#f4f4f4" stroke-width="1.3"/>
  <path d="M183,6 L191,14 M191,6 L183,14" stroke="#333" stroke-width="1.3"/>
  <rect x="208.5" y="3.5" width="11" height="14" fill="#f0f0f0" stroke="#a0a0a0"/>
  <path d="M329,6 L337,14 M337,6 L329,14" stroke="#333" stroke-width="1.3"/>
 </svg>
 <span class="a" style="left:21px;top:2px">ChangFangINPUT : 1*</span>
 <span class="a" style="left:227px;top:2px">Top0...</span>
 <span class="a" style="left:344px;top:2px">Start page</span>
</div>
<div id="status" class="a">
 <div class="st" style="left:2px;font-size:13.5px">Preselected: ChangFangINPUT.PCB004.J1IB.Part__Feature132.Face12 (-60.562889 mm, 163.089172 mm, 34.828335 mm)</div>
 <svg class="a" style="left:1835px;top:13px" width="14" height="16"><rect x="2.5" y="1.5" width="9" height="13" rx="4.5" fill="none" stroke="#222" stroke-width="1.4"/><line x1="7" y1="4" x2="7" y2="7" stroke="#222" stroke-width="1.4"/></svg>
 <div class="st" style="left:1857px;font-size:13.5px">Blender</div>
 <div class="st" style="left:1940px;font-size:13.6px">807.54 mm x 513.68 mm</div>
</div>
<svg class="a" style="left:0;top:0" width="2106" height="1254" viewBox="0 0 2106 1254">
 <g opacity="0.85">
 <rect x="1922" y="1190" width="20" height="3.5" fill="#5a5e84"/>
 <rect x="1923" y="1207" width="19" height="3.5" fill="#6a6e8e"/>
 <rect x="1921" y="1223" width="21" height="3.5" fill="#6a6e8e"/>
 <rect x="1941" y="1182" width="9.5" height="46" fill="#5c6088"/>
 <rect x="1955.5" y="1183" width="5" height="48" fill="#6ea2dc"/>
 <rect x="1955.5" y="1189.5" width="38" height="3.5" fill="#5a90d0"/>
 <polygon points="1984,1184 1990,1184 1986,1190 1980,1190" fill="#5a90d0"/>
 <rect x="1987" y="1189.5" width="5" height="10" fill="#5a90d0"/>
 <rect x="1955.5" y="1198.5" width="30" height="3.5" fill="#6ea2dc"/>
 <rect x="1955.5" y="1209.5" width="30" height="3.5" fill="#7aaee0"/>
 <rect x="1978" y="1198.5" width="8.5" height="34" fill="#6ea2dc"/>
 <rect x="1960" y="1216" width="18" height="2" fill="#7aaee0"/>
 </g>
 <text x="1997" y="1205.5" font-family="Liberation Sans" font-weight="bold" font-size="10" fill="#8a8a8a" textLength="74" lengthAdjust="spacingAndGlyphs">HIFI168.com</text>
 <g fill="none" stroke="#9a9a9a" stroke-width="1.2">
  <path d="M1999,1214 H2021 M2006,1210 L2004,1221 C2002,1226 2000,1229 1998,1231 M2005,1220 H2016 C2014,1225 2010,1229 2002,1231 M2008,1223 C2012,1227 2016,1229 2021,1231 M2014,1210 L2017,1213"/>
  <path d="M2025,1214 L2027,1222 M2033,1212 L2030,1220 M2028,1209 V1231 M2035,1214 H2048 M2041,1209 V1218 M2036,1219 H2049 M2040,1220 L2036,1231 M2044,1220 V1230 H2049"/>
  <rect x="2052" y="1210" width="19" height="21"/>
  <path d="M2055,1215 L2062,1227 M2062,1215 L2055,1227 M2063,1215 L2069,1227 M2069,1215 L2063,1227"/>
 </g>
</svg>
</body></html>
